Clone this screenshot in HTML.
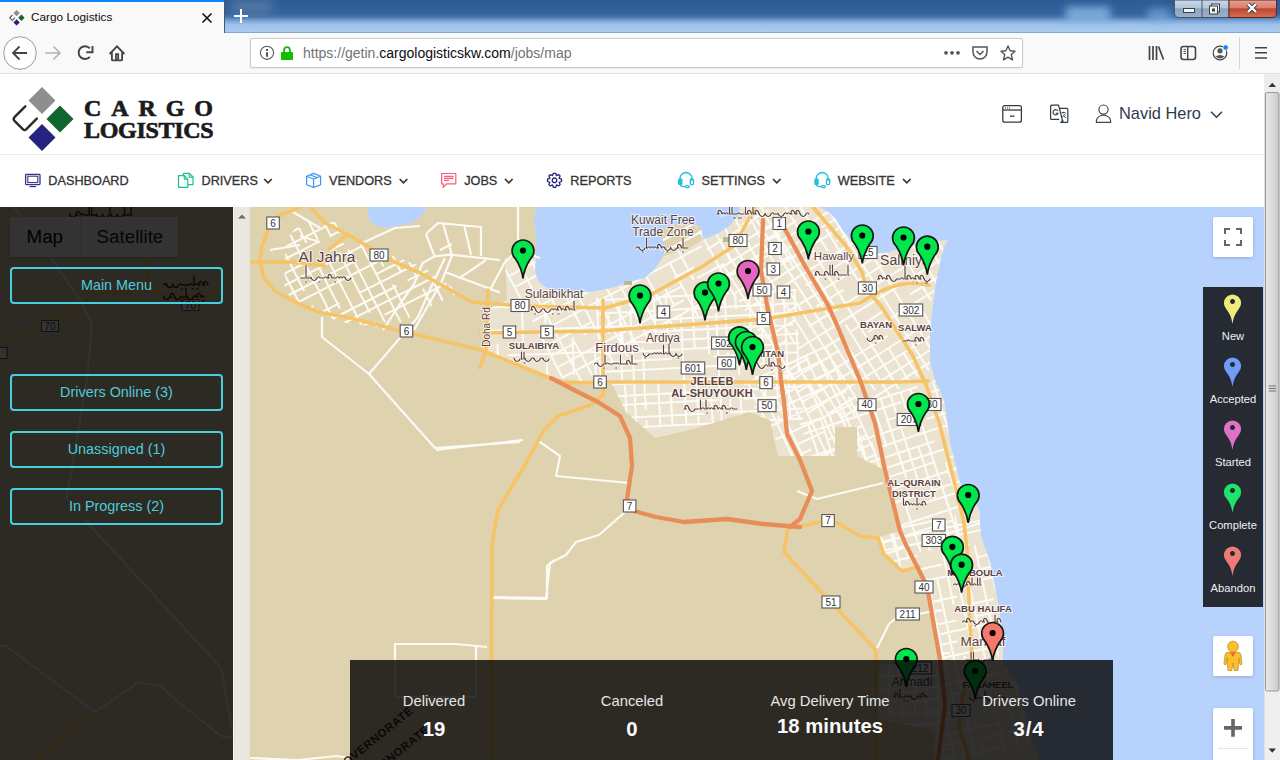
<!DOCTYPE html>
<html><head><meta charset="utf-8">
<style>
*{margin:0;padding:0;box-sizing:border-box}
html,body{width:1280px;height:760px;overflow:hidden;background:#fff;font-family:"Liberation Sans",sans-serif}
.abs{position:absolute}
svg.ic{position:absolute;overflow:visible}
#titlebar{left:0;top:0;width:1280px;height:33px;background:linear-gradient(#2d5b93 0px,#31639d 13px,#4576b0 17px,#7ea7d8 21px,#9fc2ea 25px,#aacbf0 32px);}
#titlebar:after{content:"";position:absolute;left:0;right:0;top:32px;height:1px;background:#8aa6c6}
#tab{left:0;top:0;width:224px;height:33px;background:#f9f9f9;border-top:2px solid #0a84ff}
#toolbar{left:0;top:33px;width:1280px;height:41px;background:#f9f9f9;border-bottom:1px solid #e0e0e0}
#url{left:250px;top:38px;width:773px;height:30px;background:#fff;border:1px solid #c9c9c9;border-radius:2px;box-shadow:0 1px 2px rgba(0,0,0,.06)}
.urltxt{left:303px;top:45px;font-size:14px;color:#737373;white-space:nowrap}
.urltxt b{font-weight:normal;color:#0c0c0d}
#header{left:0;top:74px;width:1264px;height:81px;background:#fff;border-bottom:1px solid #ececec}
#nav{left:0;top:155px;width:1264px;height:52px;background:#fff}
.navi{top:174px;font-size:12.7px;color:#333;white-space:nowrap;line-height:14px;-webkit-text-stroke:0.3px #333}
#scroll{left:1264px;top:74px;width:16px;height:686px;background:#efefef;border-left:1px solid #e2e2e2}
#map{left:0;top:207px;width:1264px;height:553px;overflow:hidden;background:#dfd2ae}
#sidebar{left:0;top:207px;width:233px;height:553px;background:rgba(0,0,0,.8)}
#sstrip{left:233px;top:207px;width:17px;height:553px;background:linear-gradient(90deg,#1e1c16 0,#1e1c16 0px,#faf6ee 0px,#faf6ee 1px,#e2e0da 1px,#e9e7e0 3px,#ebe8e1 14px,#e6e4dd 17px)}
.sbtn{left:10px;width:213px;height:37px;border:2px solid #45cfdf;border-radius:4px;color:#4ecbdb;font-size:14.4px;text-align:center;line-height:33px}
#stats{left:350px;top:660px;width:763px;height:100px;background:rgba(0,0,0,.8)}
.stl{top:693px;font-size:14.8px;color:#e6e6e6;text-align:center;width:200px;white-space:nowrap}
.stv{top:717.5px;font-size:20.3px;font-weight:bold;color:#fafafa;text-align:center;width:200px;white-space:nowrap}
#legend{left:1203px;top:287px;width:60px;height:320px;background:rgba(0,0,0,.8)}
.lgl{left:1203px;width:60px;text-align:center;font-size:11.2px;margin-top:1px;color:#f0f0f0}
.gbtn{background:#fff;border-radius:2px;box-shadow:0 1px 4px -1px rgba(0,0,0,.3)}
</style></head><body>
<!-- browser chrome -->
<div id="titlebar" class="abs"></div>
<div class="abs" style="left:1066px;top:7px;width:44px;height:14px;background:#8fc0ea;filter:blur(4px);opacity:.8"></div>
<div class="abs" style="left:1148px;top:9px;width:22px;height:12px;background:#7fb0de;filter:blur(4px);opacity:.7"></div>
<div class="abs" style="left:232px;top:0px;width:40px;height:14px;background:#6d8aac;filter:blur(5px);opacity:.55"></div>
<div id="tab" class="abs"></div>
<div class="abs" style="left:224px;top:0;width:1px;height:33px;background:#45586e"></div>
<svg class="ic" style="left:0;top:0" width="1280" height="74">
 <!-- favicon -->
 <g transform="translate(16.6,17.8)">
  <path d="M0,-7.9 L3.2,-4.7 L0,-1.5 L-3.2,-4.7Z" fill="#8e8e90"/>
  <path d="M4.8,-3.2 L8,0 L4.8,3.2 L1.6,0Z" fill="#11652e"/>
  <path d="M0,1.4 L3.2,4.6 L0,7.8 L-3.2,4.6Z" fill="#24237f"/>
  <path d="M-4.1,-2.9 L-6.9,0 L-4.3,2.7 L-1.6,-0.2" fill="none" stroke="#555" stroke-width="1.1"/>
 </g>
 <path d="M202.5,13.5 L211.5,22.5 M211.5,13.5 L202.5,22.5" stroke="#0c0c0d" stroke-width="1.5"/>
 <path d="M241,9 V23 M234,16 H248" stroke="#fff" stroke-width="2"/>
 <!-- window controls -->
 <defs>
  <linearGradient id="wg" x1="0" y1="0" x2="0" y2="1"><stop offset="0" stop-color="#c9d8e8"/><stop offset=".45" stop-color="#b3c6da"/><stop offset=".5" stop-color="#8ea5be"/><stop offset="1" stop-color="#97afc8"/></linearGradient>
  <linearGradient id="cg" x1="0" y1="0" x2="0" y2="1"><stop offset="0" stop-color="#e8a195"/><stop offset=".45" stop-color="#d9806f"/><stop offset=".5" stop-color="#c3442c"/><stop offset="1" stop-color="#d0705a"/></linearGradient>
 </defs>
 <path d="M1174.5,0 V13 Q1174.5,17.5 1179,17.5 H1229 V0Z" fill="url(#wg)" stroke="#4a5466" stroke-width="1"/>
 <line x1="1202" y1="0" x2="1202" y2="17" stroke="#4a5466" stroke-width="1"/>
 <path d="M1229,0 V17.5 H1272 Q1276.5,17.5 1276.5,13 V0Z" fill="url(#cg)" stroke="#5a2a22" stroke-width="1"/>
 <rect x="1183.5" y="8.5" width="11" height="4" fill="#f4f4f4" stroke="#3a3f4a" stroke-width="1"/>
 <rect x="1211.5" y="4" width="8" height="8" fill="#f4f4f4" stroke="#3a3f4a" stroke-width="1"/>
 <rect x="1209.5" y="6" width="8" height="8" fill="#f4f4f4" stroke="#3a3f4a" stroke-width="1"/>
 <rect x="1212" y="8.5" width="3" height="3" fill="#3a3f4a"/>
 <path d="M1248,4 L1256,12 M1256,4 L1248,12" stroke="#3a3f4a" stroke-width="4.2"/>
 <path d="M1248,4 L1256,12 M1256,4 L1248,12" stroke="#fafafa" stroke-width="2.4"/>
</svg>
<div class="abs" style="left:31px;top:10px;font-size:11.8px;color:#0c0c0d;white-space:nowrap">Cargo Logistics</div>
<div id="toolbar" class="abs"></div>
<div id="url" class="abs"></div>
<div class="abs urltxt">https://getin.<b>cargologisticskw.com</b>/jobs/map</div>
<svg class="ic" style="left:0;top:0" width="1280" height="74">
 <circle cx="20" cy="53" r="16.3" fill="#fff" stroke="#9a9a9a" stroke-width="1"/>
 <path d="M13,53 H27 M19.5,46.5 L13,53 L19.5,59.5" fill="none" stroke="#444" stroke-width="1.8"/>
 <path d="M45,53 H60 M53.5,46.5 L60,53 L53.5,59.5" fill="none" stroke="#b4b4b4" stroke-width="1.6"/>
 <path d="M89.8,48.3 A6.4,6.4 0 1 0 89.9,56.8" fill="none" stroke="#444" stroke-width="1.9"/>
 <path d="M86.3,52.3 H92.5 V46" fill="none" stroke="#444" stroke-width="1.9"/>
 <path d="M109.6,54 L117,46.4 L124.4,54 M111.9,52 V59.4 Q111.9,60.4 112.9,60.4 H121.1 Q122.1,60.4 122.1,59.4 V52 M116,60.4 V54.2 H118.2 V60.4" fill="none" stroke="#444" stroke-width="1.8"/>
 <circle cx="267" cy="52.8" r="6.6" fill="none" stroke="#555" stroke-width="1.1"/>
 <path d="M267,52.2 V56.8 M267,49 V51" stroke="#555" stroke-width="2"/>
 <path d="M284.1,52.5 V50 A2.9,2.9 0 0 1 289.9,50 V52.5" fill="none" stroke="#12bc00" stroke-width="1.8"/>
 <rect x="281" y="52" width="12" height="8" rx="0.6" fill="#12bc00"/>
 <circle cx="946" cy="52.8" r="1.9" fill="#555"/><circle cx="952" cy="52.8" r="1.9" fill="#555"/><circle cx="958" cy="52.8" r="1.9" fill="#555"/>
 <path d="M973,47 H987 V52 A7,7 0 0 1 973,52Z" fill="none" stroke="#555" stroke-width="1.5"/>
 <path d="M976.5,51 L980,54.5 L983.5,51" fill="none" stroke="#555" stroke-width="1.5"/>
 <path d="M1008,46 L1010.2,50.8 L1015,51.3 L1011.3,54.6 L1012.5,59.8 L1008,57.1 L1003.5,59.8 L1004.7,54.6 L1001,51.3 L1005.8,50.8Z" fill="none" stroke="#555" stroke-width="1.4" stroke-linejoin="round"/>
 <path d="M1149.5,46 V60 M1153,46 V60 M1156.5,46 V60 M1158.5,46.5 L1163.5,59.5" stroke="#444" stroke-width="1.7"/>
 <rect x="1181" y="46.5" width="14.5" height="13" rx="2.5" fill="none" stroke="#444" stroke-width="1.6"/>
 <path d="M1187.7,46.5 V59.5" stroke="#444" stroke-width="1.4"/>
 <path d="M1183.5,49.5 H1186 M1183.5,51.5 H1186 M1183.5,53.5 H1186" stroke="#444" stroke-width="0.9"/>
 <circle cx="1220" cy="53" r="6.8" fill="none" stroke="#444" stroke-width="1.2"/>
 <circle cx="1220" cy="50.8" r="2.6" fill="#555"/>
 <path d="M1215.5,56.5 Q1220,53.5 1224.5,56.5 Q1222,58.5 1220,58.5 Q1218,58.5 1215.5,56.5Z" fill="#555"/>
 <circle cx="1225.6" cy="47.5" r="2.7" fill="#0a84ff" stroke="#f9f9f9" stroke-width="0.8"/>
 <line x1="1239.5" y1="37" x2="1239.5" y2="69" stroke="#d6d6d6" stroke-width="1"/>
 <path d="M1255,47.8 H1267 M1255,52.8 H1267 M1255,58 H1267" stroke="#444" stroke-width="1.6"/>
</svg>

<!-- page -->
<div id="header" class="abs"></div>
<div id="nav" class="abs"></div>
<svg class="ic" style="left:0;top:0" width="1280" height="210">
 <path d="M42,87 L55.5,100.5 L42,114 L28.5,100.5Z" fill="#8e8e90"/>
 <path d="M60,105.5 L73.5,119 L60,132.5 L46.5,119Z" fill="#11652e"/>
 <path d="M42,124 L55.5,137.5 L42,151 L28.5,137.5Z" fill="#24237f"/>
 <path d="M25.3,106.3 L14.5,117.2 Q12.8,119 14.5,120.8 L22.8,129.2 Q24.6,131 26.4,129.2 L36.8,118.6" fill="none" stroke="#2b2b2b" stroke-width="2.4" stroke-linecap="round"/>
 <g fill="none" stroke="#333b44" stroke-width="1.3">
  <rect x="1002.8" y="105.6" width="18.6" height="16.6" rx="2"/>
  <path d="M1002.8,110 H1021.4"/>
  <path d="M1010,116.2 H1014.5" stroke-width="1.6" stroke="#5a6066"/>
 </g>
 <g fill="#333b44"><circle cx="1005.5" cy="107.9" r=".6"/><circle cx="1007.6" cy="107.9" r=".6"/><circle cx="1009.6" cy="107.9" r=".6"/></g>
 <g fill="none" stroke="#333b44" stroke-width="1.2">
  <path d="M1059.2,119.3 H1051.5 Q1050.6,119.3 1050.6,118.4 V106.1 Q1050.6,105.2 1051.5,105.2 H1058.5 L1063,122.5"/>
  <path d="M1059.5,108.4 H1066.8 Q1067.8,108.4 1067.8,109.4 V121.4 Q1067.8,122.4 1066.8,122.4 H1061 L1063.2,119.8"/>
  <path d="M1057.9,111 A2.6,2.6 0 1 0 1058,113.3 H1055.8" stroke-width="1.1"/>
  <path d="M1061.5,112.6 H1065.5 M1063.5,111.8 V113.3 M1062,117.5 L1065.5,113.6 M1063.5,115.5 L1065.8,118" stroke-width="0.9"/>
 </g>
 <g fill="none" stroke="#3f464d" stroke-width="1.2">
  <circle cx="1103.5" cy="109.6" r="4.6"/>
  <path d="M1096.4,122.4 V120.5 A7.2,6.4 0 0 1 1110.6,120.5 V122.4 Z"/>
 </g>
 <path d="M1211,111.8 L1216.5,117.2 L1222,111.8" fill="none" stroke="#2e3a4f" stroke-width="1.5"/>
 <!-- nav icons -->
 <g fill="none" stroke="#34348a" stroke-width="1.3">
  <rect x="25.6" y="174.4" width="14.4" height="10.2" rx="0.8"/>
  <rect x="27.8" y="176.2" width="10" height="6.4" stroke-width="1.1"/>
  <path d="M29.5,186.6 H36" stroke-width="1.2"/>
 </g>
 <g fill="none" stroke="#1dbf8e" stroke-width="1.2" stroke-linejoin="round">
  <path d="M183.5,175.3 V173.4 H189.3 L193,177 V184.6 H187.9"/>
  <path d="M189.2,173.5 V177.2 H193"/>
  <path d="M178.5,175.6 H184.3 L187.8,179.1 V187.3 H178.5 Z"/>
  <path d="M184.3,175.6 V179.1 H187.8"/>
 </g>
 <g fill="none" stroke="#3d95f5" stroke-width="1.2" stroke-linejoin="round">
  <path d="M306.6,176.2 L313.6,173.4 L320.6,176.2 V184.8 L313.6,187.4 L306.6,184.8 Z"/>
  <path d="M306.6,176.2 L313.6,179 L320.6,176.2 M313.6,179 V187.4"/>
  <path d="M310,174.8 L317,177.6"/>
 </g>
 <g fill="none" stroke="#ff5a78" stroke-width="1.2" stroke-linejoin="round">
  <path d="M441.6,173.5 H455.8 V183.8 H446.8 L443.2,187.3 V183.8 H441.6 Z"/>
  <path d="M444,176.4 H453.7 M444,178.4 H453.7 M444,180.3 H449"/>
 </g>
 <g transform="translate(554.5,180.3)" fill="none" stroke="#25257f" stroke-width="1.3" stroke-linejoin="round">
  <path d="M-1.2,-7 H1.2 L2,-4.6 L4.3,-5.6 L5.6,-4.3 L4.6,-2 L7,-1.2 V1.2 L4.6,2 L5.6,4.3 L4.3,5.6 L2,4.6 L1.2,7 H-1.2 L-2,4.6 L-4.3,5.6 L-5.6,4.3 L-4.6,2 L-7,1.2 V-1.2 L-4.6,-2 L-5.6,-4.3 L-4.3,-5.6 L-2,-4.6 Z"/>
  <circle r="2.3"/>
 </g>
 <g id="hs" fill="none" stroke="#26c0dc" stroke-width="1.3">
  <path d="M680,181 V178.5 A6,6 0 0 1 692,178.5 V181"/>
  <rect x="678.7" y="179" width="3.2" height="5.6" rx="1" fill="#26c0dc"/>
  <rect x="690.3" y="179" width="3.2" height="5.6" rx="1"/>
  <path d="M680.5,184.6 Q680.5,186.6 683,186.6 H685.3"/>
  <rect x="685.3" y="185.6" width="4" height="2" rx="1"/>
 </g>
 <use href="#hs" x="136.2" y="0"/>
 <g fill="none" stroke="#333" stroke-width="1.7">
  <path d="M264.2,179 L268,182.8 L271.8,179"/>
  <path d="M399.7,179 L403.5,182.8 L407.3,179"/>
  <path d="M505,179 L508.8,182.8 L512.6,179"/>
  <path d="M773,179 L776.8,182.8 L780.6,179"/>
  <path d="M903,179 L906.8,182.8 L910.6,179"/>
 </g>
</svg>
<div class="abs" style="left:84px;top:96px;font-family:'Liberation Serif',serif;font-weight:bold;font-size:24px;line-height:24px;color:#1b1b1b;letter-spacing:9.9px;white-space:nowrap;-webkit-text-stroke:0.7px #1b1b1b">CARGO</div>
<div class="abs" style="left:84px;top:118px;font-family:'Liberation Serif',serif;font-weight:bold;font-size:24px;line-height:24px;color:#1b1b1b;letter-spacing:-0.3px;white-space:nowrap;-webkit-text-stroke:0.7px #1b1b1b">LOGISTICS</div>
<div class="abs" style="left:1119px;top:104px;font-size:16.4px;color:#2e3a4f;white-space:nowrap">Navid Hero</div>

<div class="abs navi" style="left:48.3px">DASHBOARD</div>
<div class="abs navi" style="left:201.5px">DRIVERS</div>
<div class="abs navi" style="left:329px">VENDORS</div>
<div class="abs navi" style="left:464.2px">JOBS</div>
<div class="abs navi" style="left:570.3px">REPORTS</div>
<div class="abs navi" style="left:701.6px">SETTINGS</div>
<div class="abs navi" style="left:837.7px">WEBSITE</div>

<div id="map" class="abs"><svg width="1264" height="553" viewBox="0 207 1264 553" style="display:block">
<defs>
<symbol id="pin" overflow="visible"><path d="M0,28 C-0.9,21 -2.4,16 -7.5,8.3 A10.9,10.9 0 1 1 7.5,8.3 C2.4,16 0.9,21 0,28Z" stroke="#131a14" stroke-width="1.7"/><circle cx="0" cy="0" r="3.1" fill="#000"/></symbol>
<clipPath id="uc"><path d="M505,258 L540,258 L540,207 L1264,207 L1264,760 L935,760 L935,730 L880,720 L870,700 L880,665 L940,660 L927,586 L917,570 L902,571 L884,554 L880,537 L900,531 L885,470 L857,456 L857,427 L835,427 L835,456 L778,456 L770,420 L749,412 L713,423 L690,430 L655,438 L626,412 L612,384 L550,378 L483,350 L487,310 L507,300 Z"/></clipPath>
</defs>
<rect x="0" y="207" width="1264" height="553" fill="#dfd2ae"/>
<path fill="#ebe3cf" d="M505,258 L540,258 L540,207 L1264,207 L1264,760 L935,760 L935,730 L880,720 L870,700 L880,665 L940,660 L927,586 L917,570 L902,571 L884,554 L880,537 L900,531 L885,470 L857,456 L857,427 L835,427 L835,456 L778,456 L770,420 L749,412 L713,423 L690,430 L655,438 L626,412 L612,384 L550,378 L483,350 L487,310 L507,300 Z"/>
<path fill="#dfd2ae" d="M660,235 L665,227 L676,224 L701,227 L703,239 L690,248 L664,256 L665,244 Z"/>

<path clip-path="url(#uc)" fill="none" stroke="#fcfbf6" stroke-width="2" d="M567.6,229.5L602.1,211.2 M602.1,211.2L617.7,202.9 M617.7,202.9L632.4,195.1 M648.4,186.6L678.5,170.6 M696.7,160.9L731.9,142.2 M508.7,276.1L537.7,260.7 M537.7,260.7L552.8,252.7 M577.5,239.5L595.5,230.0 M641.1,205.7L677.5,186.4 M677.5,186.4L705.5,171.4 M721.3,163.1L738.2,154.0 M514.6,287.2L540.3,273.5 M540.3,273.5L571.5,256.9 M571.5,256.9L616.4,233.1 M616.4,233.1L639.3,220.9 M639.3,220.9L673.4,202.8 M673.4,202.8L715.6,180.3 M596.4,257.8L636.2,236.7 M636.2,236.7L672.3,217.5 M672.3,217.5L698.0,203.9 M698.0,203.9L734.8,184.3 M734.8,184.3L750.0,176.2 M527.8,312.1L559.9,295.0 M559.9,295.0L575.5,286.7 M575.5,286.7L614.5,266.0 M614.5,266.0L660.4,241.6 M660.4,241.6L689.0,226.4 M689.0,226.4L703.1,218.9 M723.0,208.3L738.6,200.0 M757.0,190.2L757.4,190.0 M532.7,321.3L563.8,304.8 M563.8,304.8L612.2,279.1 M612.2,279.1L659.7,253.8 M659.7,253.8L689.5,238.0 M689.5,238.0L737.9,212.3 M538.8,332.7L575.4,313.3 M575.4,313.3L588.8,306.1 M588.8,306.1L616.8,291.3 M616.8,291.3L667.9,264.1 M667.9,264.1L701.6,246.2 M741.7,224.8L768.4,210.7 M545.9,346.2L590.9,322.3 M674.4,277.9L694.0,267.5 M756.3,234.3L775.5,224.1 M551.1,355.8L574.3,343.4 M602.0,328.7L649.0,303.7 M649.0,303.7L680.8,286.8 M697.4,278.0L724.3,263.7 M770.5,239.2L780.6,233.8 M557.2,367.4L576.3,357.3 M576.3,357.3L590.6,349.7 M590.6,349.7L642.7,322.0 M642.7,322.0L683.7,300.2 M711.5,285.4L755.4,262.1 M755.4,262.1L786.8,245.4 M562.6,377.5L608.0,353.3 M608.0,353.3L655.2,328.2 M655.2,328.2L700.9,303.9 M700.9,303.9L723.2,292.1 M750.6,277.5L764.9,269.9 M764.9,269.9L788.4,257.4 M788.4,257.4L792.1,255.4 M502.4,264.2L521.0,299.2 M538.7,332.6L546.3,346.8 M546.3,346.8L563.6,379.5 M563.6,379.5L568.1,387.8 M515.4,257.3L521.3,268.4 M521.3,268.4L538.8,301.3 M538.8,301.3L554.1,330.0 M554.1,330.0L561.3,343.5 M561.3,343.5L570.7,361.2 M570.7,361.2L581.1,380.9 M526.4,251.5L544.4,285.4 M551.5,298.7L558.3,311.5 M574.4,341.7L590.7,372.4 M590.7,372.4L592.1,375.1 M544.7,257.5L563.0,292.1 M563.0,292.1L575.1,314.8 M575.1,314.8L585.9,335.2 M602.3,365.9L603.8,368.8 M548.2,239.8L561.2,264.2 M571.8,284.1L589.3,317.1 M589.3,317.1L600.4,338.0 M600.4,338.0L613.9,363.5 M561.9,232.6L573.7,254.7 M596.6,297.9L601.4,306.8 M601.4,306.8L608.5,320.2 M608.5,320.2L623.4,348.2 M623.4,348.2L627.6,356.2 M602.0,279.6L610.6,295.7 M610.6,295.7L622.4,318.0 M622.4,318.0L637.8,347.0 M637.8,347.0L639.4,349.9 M585.2,220.2L597.1,242.6 M597.1,242.6L608.2,263.4 M608.2,263.4L619.6,284.9 M619.6,284.9L634.1,312.2 M634.1,312.2L650.9,343.8 M597.0,213.9L615.0,247.7 M640.6,295.9L654.7,322.5 M623.6,233.5L640.7,265.7 M640.7,265.7L648.5,280.4 M648.5,280.4L658.8,299.8 M658.8,299.8L675.3,330.8 M619.3,202.0L630.1,222.3 M639.5,240.1L648.7,257.4 M648.7,257.4L653.7,266.7 M664.6,287.2L673.9,304.8 M633.3,194.6L649.1,224.3 M649.1,224.3L655.3,235.9 M655.3,235.9L660.6,245.8 M669.1,261.8L679.7,281.8 M679.7,281.8L695.9,312.3 M695.9,312.3L699.1,318.2 M659.7,215.7L665.3,226.0 M675.9,246.1L693.8,279.8 M658.6,181.2L669.7,202.0 M669.7,202.0L682.2,225.5 M714.4,286.1L723.5,303.2 M723.5,303.2L724.3,304.8 M670.1,175.1L677.3,188.6 M677.3,188.6L682.2,197.9 M682.2,197.9L687.1,207.1 M699.6,230.6L711.0,252.0 M711.0,252.0L717.2,263.6 M717.2,263.6L727.9,283.9 M727.9,283.9L735.8,298.7 M681.6,168.9L696.0,196.0 M696.0,196.0L705.5,213.9 M705.5,213.9L720.1,241.4 M720.1,241.4L730.5,261.0 M736.0,271.3L741.7,282.0 M690.9,164.0L707.4,195.1 M707.4,195.1L721.5,221.7 M721.5,221.7L729.6,236.9 M740.8,257.9L751.8,278.6 M751.8,278.6L756.6,287.6 M702.6,157.8L710.7,173.1 M710.7,173.1L719.8,190.1 M719.8,190.1L724.5,199.0 M724.5,199.0L735.9,220.4 M735.9,220.4L743.4,234.5 M743.4,234.5L748.2,243.5 M748.2,243.5L754.1,254.7 M714.5,151.4L726.7,174.3 M726.7,174.3L740.6,200.5 M740.6,200.5L757.7,232.6 M757.7,232.6L767.0,250.1 M767.0,250.1L773.8,262.9 M727.8,144.4L745.0,176.8 M745.0,176.8L760.1,205.1 M760.1,205.1L766.7,217.6 M766.7,217.6L778.5,239.8 M778.5,239.8L793.5,268.0 M478.7,307.8L525.4,306.2 M617.9,303.0L638.6,302.2 M479.5,331.3L518.2,330.0 M552.9,328.8L596.8,327.2 M596.8,327.2L631.9,326.0 M507.9,355.2L535.8,354.2 M535.8,354.2L562.0,353.3 M562.0,353.3L611.2,351.6 M611.2,351.6L640.2,350.6 M481.2,380.4L524.2,378.9 M478.7,307.8L479.4,329.5 M479.4,329.5L480.5,361.8 M480.5,361.8L481.3,384.1 M481.3,384.1L481.4,387.8 M497.4,344.5L498.7,384.0 M498.7,384.0L498.9,387.2 M521.9,306.3L523.3,345.5 M544.9,305.5L545.5,324.0 M546.9,362.8L547.6,385.5 M572.6,337.1L573.9,374.6 M594.9,348.6L595.7,371.5 M595.7,371.5L596.2,383.8 M619.4,302.9L620.0,320.9 M620.0,320.9L621.2,353.7 M621.2,353.7L622.0,375.9 M622.0,375.9L622.2,382.9 M596.7,300.3L627.9,298.7 M655.3,297.3L674.8,296.2 M674.8,296.2L702.6,294.8 M702.6,294.8L728.8,293.4 M766.8,291.4L796.5,289.9 M597.4,313.7L648.9,311.0 M648.9,311.0L704.9,308.1 M704.9,308.1L744.6,306.0 M744.6,306.0L761.8,305.1 M761.8,305.1L797.0,303.3 M797.0,303.3L797.2,303.3 M654.5,320.0L690.7,318.1 M690.7,318.1L719.1,316.6 M719.1,316.6L778.0,313.5 M778.0,313.5L797.6,312.5 M653.5,331.8L709.2,328.9 M709.2,328.9L734.0,327.6 M734.0,327.6L793.8,324.5 M629.4,342.6L655.1,341.2 M655.1,341.2L695.7,339.1 M695.7,339.1L744.3,336.6 M744.3,336.6L777.9,334.8 M777.9,334.8L798.8,333.7 M599.5,353.5L627.0,352.0 M627.0,352.0L647.6,350.9 M647.6,350.9L690.9,348.7 M690.9,348.7L715.6,347.4 M715.6,347.4L741.7,346.0 M741.7,346.0L776.7,344.2 M776.7,344.2L799.2,343.0 M600.0,362.6L616.4,361.7 M616.4,361.7L671.7,358.8 M713.0,356.6L745.6,354.9 M745.6,354.9L797.7,352.2 M600.5,372.1L622.4,370.9 M622.4,370.9L668.0,368.6 M668.0,368.6L715.5,366.1 M715.5,366.1L764.8,363.5 M601.2,385.0L626.6,383.7 M626.6,383.7L670.6,381.4 M670.6,381.4L691.3,380.3 M691.3,380.3L734.9,378.0 M754.9,376.9L793.5,374.9 M601.8,397.0L617.3,396.2 M617.3,396.2L652.9,394.3 M652.9,394.3L696.9,392.0 M733.2,390.1L759.3,388.7 M759.3,388.7L801.5,386.5 M602.3,406.1L639.7,404.1 M639.7,404.1L673.5,402.3 M673.5,402.3L718.5,400.0 M743.6,398.7L773.8,397.1 M603.0,419.0L651.2,416.5 M651.2,416.5L675.4,415.2 M675.4,415.2L704.3,413.7 M729.7,412.4L778.8,409.8 M778.8,409.8L802.7,408.6 M603.5,429.0L628.5,427.7 M628.5,427.7L673.4,425.3 M673.4,425.3L694.9,424.2 M694.9,424.2L719.5,422.9 M740.8,421.8L758.5,420.8 M758.5,420.8L803.2,418.5 M596.7,300.3L598.8,340.2 M599.9,360.0L601.9,398.1 M601.9,398.1L602.4,409.0 M602.4,409.0L603.5,430.1 M608.2,314.8L609.1,333.2 M613.2,410.7L614.2,429.6 M621.7,322.0L622.9,346.2 M624.9,383.7L626.0,404.6 M626.0,404.6L626.6,415.5 M626.6,415.5L627.3,428.9 M630.2,309.6L632.2,347.2 M632.2,347.2L633.9,379.6 M633.9,379.6L635.0,399.7 M635.0,399.7L636.5,428.4 M640.0,298.1L641.6,329.5 M642.6,347.8L644.3,380.4 M644.3,380.4L645.8,409.4 M646.4,420.1L646.8,427.9 M653.7,297.3L654.8,318.9 M654.8,318.9L656.0,341.8 M658.0,379.6L659.8,413.6 M659.8,413.6L660.5,427.2 M665.7,296.7L666.8,316.5 M666.8,316.5L667.9,337.3 M670.8,394.2L672.2,420.7 M672.2,420.7L672.5,426.5 M680.6,313.9L681.3,326.8 M681.3,326.8L682.9,358.0 M682.9,358.0L683.8,375.0 M683.8,375.0L685.3,403.6 M685.3,403.6L686.5,425.8 M692.0,295.3L692.7,308.9 M692.7,308.9L693.7,327.7 M693.7,327.7L694.8,348.9 M696.5,382.2L698.4,418.7 M698.4,418.7L698.8,425.2 M707.2,319.8L709.0,354.0 M711.1,393.7L712.4,417.9 M712.4,417.9L712.7,424.4 M716.1,312.9L716.9,328.6 M716.9,328.6L718.3,356.0 M718.3,356.0L719.4,377.2 M719.4,377.2L720.7,400.6 M720.7,400.6L721.9,423.9 M724.6,293.6L726.1,321.5 M726.1,321.5L726.9,338.0 M727.7,352.2L728.6,369.8 M730.1,399.3L730.7,409.7 M735.1,293.1L736.0,309.1 M737.4,335.6L738.1,348.6 M738.1,348.6L739.4,375.0 M740.1,387.8L741.7,418.6 M741.7,418.6L742.0,422.9 M748.9,292.3L749.9,311.7 M749.9,311.7L751.0,332.4 M751.0,332.4L752.9,368.3 M755.6,420.9L755.7,422.2 M760.0,291.8L761.8,326.3 M761.8,326.3L763.7,362.8 M764.5,377.6L765.9,404.1 M772.1,291.1L773.2,312.2 M773.2,312.2L774.0,326.6 M774.0,326.6L775.3,352.2 M775.3,352.2L776.0,365.4 M776.0,365.4L777.8,399.5 M778.6,415.4L778.9,421.0 M783.5,290.5L784.1,302.1 M784.1,302.1L785.2,323.7 M785.2,323.7L786.7,352.3 M786.7,352.3L787.5,367.1 M787.5,367.1L788.4,383.7 M788.4,383.7L790.2,419.1 M794.5,290.0L795.8,315.5 M796.5,329.1L798.2,360.8 M798.2,360.8L798.8,372.1 M876.5,143.7L897.6,177.4 M897.6,177.4L912.8,201.8 M912.8,201.8L934.7,236.8 M934.7,236.8L958.3,274.7 M976.7,304.1L993.1,330.3 M867.9,149.1L894.0,191.0 M932.2,252.0L943.2,269.6 M943.2,269.6L953.3,285.8 M857.1,155.8L883.6,198.2 M883.6,198.2L892.9,213.0 M892.9,213.0L909.8,240.2 M909.8,240.2L921.0,258.1 M921.0,258.1L952.7,308.8 M845.3,163.2L865.0,194.7 M894.8,242.4L921.6,285.2 M921.6,285.2L931.1,300.4 M957.1,342.0L961.9,349.8 M834.3,170.1L845.6,188.3 M875.5,236.2L889.7,258.9 M917.6,303.5L947.9,351.9 M823.3,177.0L834.0,194.1 M834.0,194.1L857.1,231.1 M857.1,231.1L885.9,277.1 M885.9,277.1L907.7,312.0 M907.7,312.0L918.1,328.7 M918.1,328.7L939.9,363.5 M812.3,183.9L826.5,206.7 M826.5,206.7L848.3,241.4 M848.3,241.4L874.4,283.3 M874.4,283.3L886.6,302.8 M886.6,302.8L895.7,317.4 M895.7,317.4L909.7,339.8 M909.7,339.8L928.9,370.4 M826.0,229.1L848.6,265.3 M848.6,265.3L868.8,297.6 M903.4,353.0L911.4,365.8 M911.4,365.8L918.4,377.0 M793.2,195.8L815.1,230.7 M815.1,230.7L827.9,251.3 M889.0,349.0L909.8,382.3 M782.3,202.6L799.8,230.7 M799.8,230.7L808.1,243.8 M808.1,243.8L829.4,278.0 M829.4,278.0L852.8,315.4 M852.8,315.4L883.1,363.8 M883.1,363.8L896.9,386.0 M896.9,386.0L898.9,389.2 M813.1,272.7L834.2,306.4 M845.5,324.6L868.0,360.5 M868.0,360.5L889.5,395.0 M764.6,213.7L779.9,238.2 M779.9,238.2L789.0,252.8 M789.0,252.8L815.6,295.4 M815.6,295.4L823.7,308.3 M823.7,308.3L849.4,349.5 M849.4,349.5L875.1,390.5 M756.0,219.1L764.8,233.3 M764.8,233.3L790.7,274.6 M790.7,274.6L818.8,319.6 M818.8,319.6L833.1,342.4 M833.1,342.4L851.4,371.8 M851.4,371.8L871.8,404.5 M871.8,404.5L872.5,405.6 M790.5,293.4L816.2,334.5 M816.2,334.5L841.9,375.7 M841.9,375.7L864.0,411.0 M738.8,229.8L768.3,277.2 M768.3,277.2L792.8,316.3 M792.8,316.3L824.1,366.4 M824.1,366.4L852.1,411.2 M852.1,411.2L855.3,416.4 M728.1,236.5L749.6,271.0 M749.6,271.0L762.6,291.8 M762.6,291.8L772.4,307.5 M783.8,325.7L794.3,342.5 M819.1,382.2L843.6,421.4 M843.6,421.4L844.6,423.1 M720.1,241.4L742.2,276.7 M742.2,276.7L769.6,320.6 M798.8,367.3L827.5,413.2 M722.3,263.7L750.4,308.8 M750.4,308.8L773.5,345.7 M773.5,345.7L796.5,382.6 M857.3,155.8L842.2,165.1 M842.2,165.1L815.6,181.8 M815.6,181.8L798.9,192.2 M798.9,192.2L777.6,205.5 M753.4,220.7L734.4,232.5 M734.4,232.5L706.9,249.7 M792.7,210.9L764.8,228.3 M764.8,228.3L756.3,233.6 M756.3,233.6L735.3,246.7 M735.3,246.7L722.1,255.0 M722.1,255.0L713.5,260.3 M888.6,163.1L856.1,183.4 M856.1,183.4L842.2,192.1 M796.3,220.7L767.8,238.6 M767.8,238.6L739.3,256.4 M739.3,256.4L721.8,267.3 M721.8,267.3L719.0,269.1 M862.5,190.5L848.8,199.1 M848.8,199.1L817.4,218.7 M817.4,218.7L799.3,230.0 M799.3,230.0L784.8,239.0 M784.8,239.0L762.8,252.8 M762.8,252.8L735.2,270.1 M735.2,270.1L724.0,277.1 M898.8,179.4L868.9,198.1 M841.5,215.2L821.9,227.4 M798.6,241.9L778.4,254.6 M763.9,263.7L747.7,273.8 M904.0,187.7L889.2,196.9 M850.6,221.0L817.3,241.8 M817.3,241.8L806.2,248.7 M806.2,248.7L795.2,255.6 M795.2,255.6L761.7,276.6 M761.7,276.6L734.5,293.5 M734.5,293.5L734.4,293.6 M909.0,195.7L895.3,204.3 M895.3,204.3L885.9,210.2 M885.9,210.2L857.3,228.0 M857.3,228.0L836.1,241.3 M815.9,254.0L792.0,268.9 M792.0,268.9L764.7,285.9 M764.7,285.9L745.3,298.1 M745.3,298.1L739.4,301.7 M914.4,204.4L887.5,221.1 M887.5,221.1L859.4,238.7 M859.4,238.7L829.2,257.6 M829.2,257.6L804.4,273.1 M804.4,273.1L788.0,283.4 M788.0,283.4L777.0,290.2 M777.0,290.2L748.6,308.0 M748.6,308.0L744.8,310.3 M920.3,213.8L900.2,226.3 M900.2,226.3L881.3,238.1 M849.2,258.2L824.1,273.9 M824.1,273.9L805.7,285.4 M927.1,224.7L894.7,245.0 M894.7,245.0L883.7,251.9 M883.7,251.9L861.4,265.8 M861.4,265.8L839.9,279.2 M839.9,279.2L810.3,297.7 M810.3,297.7L791.4,309.5 M791.4,309.5L777.6,318.2 M777.6,318.2L759.1,329.7 M759.1,329.7L757.5,330.7 M932.8,233.9L922.9,240.1 M904.3,251.7L885.1,263.7 M885.1,263.7L858.9,280.1 M843.7,289.6L816.3,306.7 M794.4,320.4L765.6,338.4 M939.7,244.8L910.6,263.0 M910.6,263.0L890.2,275.7 M890.2,275.7L875.9,284.6 M875.9,284.6L858.5,295.5 M858.5,295.5L829.2,313.8 M829.2,313.8L808.8,326.6 M786.4,340.6L770.1,350.8 M946.7,256.0L931.4,265.6 M931.4,265.6L916.5,274.9 M903.3,283.2L876.4,299.9 M876.4,299.9L861.7,309.1 M861.7,309.1L841.0,322.1 M841.0,322.1L816.3,337.5 M816.3,337.5L798.6,348.5 M953.7,267.2L922.1,286.9 M922.1,286.9L910.1,294.4 M885.5,309.8L876.7,315.3 M876.7,315.3L851.5,331.0 M840.5,337.9L826.1,346.9 M808.8,357.7L784.0,373.2 M958.9,275.5L927.7,295.0 M927.7,295.0L899.4,312.7 M899.4,312.7L868.1,332.2 M838.3,350.8L812.2,367.2 M812.2,367.2L789.3,381.5 M966.0,286.9L943.4,301.0 M887.5,335.9L866.6,349.0 M866.6,349.0L844.4,362.9 M844.4,362.9L835.7,368.3 M835.7,368.3L815.3,381.0 M815.3,381.0L796.4,392.9 M971.7,296.1L952.6,308.1 M952.6,308.1L942.2,314.6 M917.5,330.0L893.5,345.0 M893.5,345.0L861.4,365.1 M861.4,365.1L827.9,386.0 M827.9,386.0L807.1,399.0 M807.1,399.0L802.1,402.1 M978.2,306.4L961.1,317.1 M961.1,317.1L943.3,328.2 M943.3,328.2L921.4,341.9 M921.4,341.9L907.6,350.5 M907.6,350.5L888.4,362.5 M888.4,362.5L858.8,381.0 M858.8,381.0L829.3,399.4 M829.3,399.4L808.6,412.4 M984.3,316.2L951.0,337.0 M951.0,337.0L922.4,354.9 M922.4,354.9L905.8,365.2 M905.8,365.2L882.4,379.8 M854.0,397.6L827.1,414.4 M981.2,330.5L949.3,350.4 M949.3,350.4L924.1,366.2 M924.1,366.2L892.4,386.0 M892.4,386.0L868.3,401.1 M868.3,401.1L842.1,417.4 M825.4,346.6L840.5,378.9 M848.7,396.6L855.8,411.7 M855.8,411.7L876.1,455.4 M815.3,351.3L837.2,398.5 M837.2,398.5L854.3,435.0 M854.3,435.0L866.0,460.1 M805.4,356.0L819.9,387.1 M796.6,360.1L818.3,406.7 M818.3,406.7L842.1,457.8 M842.1,457.8L847.3,468.8 M785.2,365.4L809.4,417.2 M809.4,417.2L824.8,450.2 M824.8,450.2L833.0,467.9 M777.0,369.2L783.4,383.0 M783.4,383.0L792.0,401.6 M792.0,401.6L800.1,418.7 M774.7,396.1L795.8,441.3 M795.8,441.3L815.5,483.6 M756.2,378.9L774.5,418.1 M774.5,418.1L789.6,450.5 M789.6,450.5L800.8,474.5 M748.0,382.7L766.7,422.9 M766.7,422.9L774.5,439.7 M794.7,483.0L798.7,491.5 M825.4,346.6L806.4,355.5 M806.4,355.5L785.4,365.3 M785.4,365.3L772.4,371.3 M772.4,371.3L753.4,380.2 M753.4,380.2L743.9,384.6 M830.2,356.9L799.8,371.1 M799.8,371.1L769.4,385.2 M752.4,393.2L748.6,394.9 M836.1,369.5L818.0,378.0 M818.0,378.0L782.4,394.6 M782.4,394.6L757.0,406.4 M757.0,406.4L754.5,407.5 M840.9,379.7L813.2,392.6 M813.2,392.6L779.8,408.2 M763.0,416.0L759.3,417.8 M846.2,391.1L814.9,405.6 M814.9,405.6L804.7,410.4 M804.7,410.4L773.6,424.9 M773.6,424.9L764.6,429.1 M852.1,403.9L821.1,418.3 M821.1,418.3L787.2,434.1 M787.2,434.1L775.8,439.4 M823.4,432.1L797.9,444.0 M862.3,425.6L832.8,439.4 M811.2,449.4L780.7,463.7 M866.7,435.1L841.8,446.6 M841.8,446.6L808.7,462.1 M808.7,462.1L786.7,472.3 M870.9,444.2L842.8,457.3 M842.8,457.3L818.4,468.7 M795.3,479.5L789.4,482.2 M875.7,454.4L863.7,460.0 M833.3,474.2L808.0,486.0 M990.4,363.0L1008.8,419.7 M1008.8,419.7L1020.2,454.7 M1020.2,454.7L1028.5,480.2 M1028.5,480.2L1039.0,512.7 M1039.0,512.7L1039.8,515.2 M998.6,433.1L1011.0,471.3 M1011.0,471.3L1022.0,505.1 M976.0,402.3L994.0,457.6 M994.0,457.6L1006.5,496.0 M1006.5,496.0L1015.3,523.2 M966.3,407.8L984.3,463.4 M992.1,487.2L1000.3,512.4 M1000.3,512.4L1004.9,526.5 M942.9,378.5L948.2,394.7 M948.2,394.7L962.7,439.4 M981.0,495.8L987.6,516.3 M987.6,516.3L992.3,530.6 M932.9,381.7L945.7,421.3 M945.7,421.3L951.9,440.1 M945.8,462.2L963.4,516.4 M910.2,389.1L916.2,407.5 M916.2,407.5L932.6,457.8 M932.6,457.8L943.5,491.4 M943.5,491.4L959.6,540.9 M900.6,392.2L906.0,408.9 M918.4,446.8L935.1,498.4 M945.5,530.2L950.1,544.3 M890.5,395.5L897.4,416.9 M897.4,416.9L906.5,444.8 M906.5,444.8L912.7,464.0 M912.7,464.0L918.1,480.7 M932.1,523.5L939.9,547.6 M880.7,398.7L888.1,421.6 M888.1,421.6L906.5,478.2 M924.0,532.1L930.1,550.8 M871.9,401.5L886.6,446.9 M904.8,503.0L920.7,551.8 M871.3,442.4L882.0,475.3 M882.0,475.3L889.7,498.9 M896.2,519.1L908.8,557.8 M855.6,426.3L868.7,466.6 M877.1,492.6L890.3,533.1 M890.3,533.1L899.3,560.8 M840.3,411.8L845.9,428.9 M845.9,428.9L856.2,460.6 M856.2,460.6L861.6,477.2 M861.6,477.2L870.9,505.8 M870.9,505.8L887.5,557.1 M887.5,557.1L889.8,563.9 M829.5,415.3L846.3,466.9 M846.3,466.9L853.5,489.1 M863.2,519.1L873.0,549.2 M873.0,549.2L877.7,563.7 M877.7,563.7L878.9,567.5 M820.4,418.3L834.9,463.1 M834.9,463.1L851.6,514.4 M851.6,514.4L866.1,559.1 M807.6,422.4L825.6,477.5 M825.6,477.5L837.3,513.7 M990.4,363.0L977.9,367.1 M945.1,377.7L932.9,381.7 M917.8,386.6L891.2,395.3 M891.2,395.3L866.7,403.2 M866.7,403.2L854.3,407.2 M824.3,417.0L811.3,421.2 M811.3,421.2L800.2,424.8 M972.3,379.0L945.9,387.6 M945.9,387.6L932.2,392.0 M901.4,402.0L868.3,412.8 M868.3,412.8L847.7,419.5 M847.7,419.5L814.2,430.4 M814.2,430.4L803.1,434.0 M978.2,390.6L959.1,396.8 M959.1,396.8L921.6,409.0 M921.6,409.0L886.0,420.6 M852.3,431.5L828.1,439.4 M1000.8,395.0L973.2,403.9 M948.6,411.9L926.7,419.0 M916.6,422.3L879.4,434.4 M879.4,434.4L843.2,446.2 M843.2,446.2L810.6,456.8 M1004.5,406.6L987.4,412.1 M987.4,412.1L970.1,417.8 M970.1,417.8L934.3,429.4 M934.3,429.4L917.6,434.8 M917.6,434.8L895.7,441.9 M895.7,441.9L878.0,447.7 M850.0,456.8L823.5,465.4 M823.5,465.4L814.3,468.4 M970.3,429.6L952.4,435.5 M934.6,441.2L922.6,445.1 M922.6,445.1L889.1,456.0 M889.1,456.0L863.4,464.4 M863.4,464.4L848.1,469.3 M848.1,469.3L825.5,476.7 M825.5,476.7L817.8,479.2 M994.9,432.7L970.7,440.6 M944.5,449.1L925.0,455.5 M925.0,455.5L908.6,460.8 M908.6,460.8L885.1,468.4 M885.1,468.4L847.4,480.6 M1014.2,436.3L979.8,447.4 M979.8,447.4L968.5,451.1 M968.5,451.1L946.5,458.3 M933.8,462.4L897.0,474.4 M897.0,474.4L883.0,478.9 M883.0,478.9L863.5,485.2 M863.5,485.2L836.4,494.0 M836.4,494.0L824.0,498.1 M1018.1,448.3L987.4,458.3 M987.4,458.3L964.3,465.8 M964.3,465.8L934.6,475.5 M934.6,475.5L921.5,479.8 M921.5,479.8L911.8,482.9 M911.8,482.9L885.6,491.4 M885.6,491.4L848.6,503.4 M848.6,503.4L827.9,510.2 M1022.2,461.1L995.4,469.8 M995.4,469.8L973.0,477.1 M973.0,477.1L942.8,486.9 M942.8,486.9L922.2,493.6 M922.2,493.6L901.7,500.2 M901.7,500.2L869.7,510.6 M869.7,510.6L846.0,518.3 M846.0,518.3L832.0,522.9 M1025.2,470.3L999.3,478.7 M999.3,478.7L987.3,482.6 M987.3,482.6L968.5,488.7 M968.5,488.7L935.1,499.6 M935.1,499.6L919.8,504.6 M884.3,516.1L873.4,519.6 M873.4,519.6L849.7,527.3 M849.7,527.3L835.0,532.1 M1029.6,483.6L1005.3,491.5 M1005.3,491.5L976.2,500.9 M976.2,500.9L956.5,507.3 M956.5,507.3L937.0,513.7 M937.0,513.7L908.2,523.1 M908.2,523.1L895.8,527.1 M895.8,527.1L874.9,533.9 M874.9,533.9L849.0,542.3 M849.0,542.3L839.4,545.4 M1033.0,494.3L1005.7,503.1 M1005.7,503.1L986.4,509.4 M953.6,520.1L935.0,526.1 M935.0,526.1L901.9,536.9 M901.9,536.9L889.3,541.0 M889.3,541.0L860.1,550.5 M860.1,550.5L842.8,556.1 M1036.5,504.8L1022.5,509.4 M1022.5,509.4L998.4,517.2 M983.5,522.0L956.0,531.0 M956.0,531.0L936.4,537.3 M908.8,546.3L887.5,553.2 M887.5,553.2L869.2,559.2 M869.2,559.2L859.6,562.3 M859.6,562.3L846.3,566.6 M988.6,509.1L993.6,532.4 M993.6,532.4L1001.9,571.5 M1001.9,571.5L1011.1,614.6 M1011.1,614.6L1023.5,673.2 M1030.5,705.9L1035.1,727.5 M979.0,511.2L987.0,548.8 M987.0,548.8L995.9,590.5 M999.6,607.9L1009.9,656.5 M1009.9,656.5L1019.7,702.6 M1019.7,702.6L1024.4,724.8 M1024.4,724.8L1028.4,743.8 M1028.4,743.8L1028.9,745.9 M974.7,545.1L986.2,599.0 M986.2,599.0L998.3,655.9 M1007.2,697.9L1010.7,714.5 M1010.7,714.5L1017.9,748.3 M954.8,516.3L965.5,566.9 M965.5,566.9L974.3,608.1 M974.3,608.1L982.1,644.6 M982.1,644.6L987.4,669.9 M997.3,716.2L1003.3,744.5 M1003.3,744.5L1004.7,751.1 M944.8,518.4L949.5,540.7 M949.5,540.7L954.4,563.6 M954.4,563.6L960.2,591.1 M960.2,591.1L964.4,610.8 M964.4,610.8L971.2,642.5 M974.9,660.0L985.7,711.0 M935.8,520.3L945.2,564.2 M945.2,564.2L949.7,585.8 M949.7,585.8L953.7,604.5 M964.6,656.0L971.9,690.1 M982.6,740.2L985.7,755.1 M937.3,579.5L949.3,636.0 M949.3,636.0L954.5,660.7 M954.5,660.7L958.9,681.1 M958.9,681.1L964.4,707.2 M964.4,707.2L973.0,747.8 M973.0,747.8L975.1,757.4 M926.6,577.8L934.5,615.0 M934.5,615.0L940.2,641.6 M940.2,641.6L946.9,673.2 M946.9,673.2L955.3,712.9 M962.1,744.7L965.2,759.4 M914.3,570.7L922.7,610.1 M922.7,610.1L930.5,646.8 M930.5,646.8L934.2,664.4 M939.4,689.1L949.3,735.3 M949.3,735.3L954.9,761.6 M892.4,529.6L903.7,583.1 M903.7,583.1L908.1,603.6 M908.1,603.6L911.5,619.6 M911.5,619.6L920.8,663.4 M920.8,663.4L927.8,696.3 M937.5,741.7L942.3,764.3 M885.3,554.8L897.0,609.6 M910.2,672.1L915.2,695.5 M921.9,726.9L927.9,755.3 M927.9,755.3L930.4,766.9 M868.9,534.6L878.7,580.8 M878.7,580.8L885.9,614.6 M892.3,644.6L903.2,696.0 M909.0,723.3L918.8,769.3 M938.7,519.7L902.1,527.5 M902.1,527.5L889.7,530.1 M889.7,530.1L868.4,534.7 M868.4,534.7L861.5,536.1 M990.6,518.4L953.0,526.3 M953.0,526.3L916.0,534.2 M916.0,534.2L884.5,540.9 M884.5,540.9L863.4,545.4 M992.5,527.4L962.3,533.9 M962.3,533.9L937.4,539.1 M937.4,539.1L923.9,542.0 M923.9,542.0L912.9,544.4 M912.9,544.4L879.4,551.5 M879.4,551.5L865.4,554.4 M969.3,544.8L957.8,547.3 M917.0,555.9L886.5,562.4 M869.7,566.0L867.9,566.4 M997.9,552.7L977.8,557.0 M942.1,564.6L915.8,570.2 M915.8,570.2L882.0,577.3 M1000.5,564.8L973.1,570.6 M973.1,570.6L940.9,577.5 M940.9,577.5L927.7,580.2 M907.4,584.6L895.8,587.0 M895.8,587.0L880.2,590.3 M1002.7,575.2L979.1,580.2 M964.4,583.3L954.3,585.5 M922.5,592.2L891.7,598.8 M956.8,596.6L920.0,604.4 M920.0,604.4L891.8,610.4 M891.8,610.4L877.9,613.4 M993.3,599.3L960.8,606.2 M942.3,610.2L913.8,616.2 M1009.9,609.0L975.7,616.3 M956.3,620.4L922.3,627.6 M922.3,627.6L901.8,632.0 M901.8,632.0L882.7,636.0 M1012.0,619.0L1001.0,621.3 M1001.0,621.3L972.8,627.3 M972.8,627.3L942.3,633.8 M942.3,633.8L904.8,641.8 M957.4,641.3L934.6,646.2 M1016.9,642.2L982.0,649.6 M982.0,649.6L959.8,654.3 M959.8,654.3L930.6,660.5 M930.6,660.5L908.4,665.2 M908.4,665.2L889.8,669.2 M983.3,662.7L964.9,666.7 M964.9,666.7L938.6,672.3 M923.0,675.6L903.8,679.6 M903.8,679.6L892.5,682.0 M1022.4,668.1L984.0,676.2 M984.0,676.2L956.1,682.2 M956.1,682.2L944.5,684.6 M944.5,684.6L916.9,690.5 M916.9,690.5L895.3,695.1 M1024.8,679.2L996.0,685.3 M996.0,685.3L976.1,689.5 M965.6,691.8L935.9,698.1 M935.9,698.1L923.6,700.7 M923.6,700.7L902.9,705.1 M902.9,705.1L897.6,706.2 M1005.8,695.3L990.8,698.5 M964.9,704.0L929.8,711.5 M929.8,711.5L917.2,714.2 M917.2,714.2L900.1,717.8 M1029.7,702.3L1013.3,705.8 M1013.3,705.8L1000.2,708.6 M951.4,718.9L928.7,723.8 M928.7,723.8L902.7,729.3 M1001.6,722.5L967.5,729.8 M967.5,729.8L952.7,732.9 M952.7,732.9L926.4,738.5 M926.4,738.5L912.6,741.4 M1034.9,726.6L1024.6,728.7 M1024.6,728.7L1008.6,732.1 M1008.6,732.1L978.0,738.6 M978.0,738.6L942.2,746.3 M942.2,746.3L907.7,753.6 M1002.3,747.4L970.7,754.1 M970.7,754.1L938.5,760.9 M850.0,640.0L898.2,640.0 M901.1,653.3L950.0,653.3 M850.0,664.8L873.7,664.8 M873.7,664.8L926.4,664.8 M946.5,664.8L950.0,664.8 M850.0,675.9L889.9,675.9 M889.9,675.9L935.9,675.9 M935.9,675.9L950.0,675.9 M850.0,689.2L896.0,689.2 M850.0,701.2L871.8,701.2 M871.8,701.2L926.1,701.2 M942.7,701.2L950.0,701.2 M886.4,713.6L939.4,713.6 M939.4,713.6L950.0,713.6 M879.8,724.0L935.0,724.0 M850.0,736.2L886.0,736.2 M886.0,736.2L918.5,736.2 M918.5,736.2L933.8,736.2 M909.4,749.0L931.0,749.0 M931.0,749.0L950.0,749.0 M850.0,640.0L850.0,657.9 M850.0,657.9L850.0,683.7 M850.0,723.5L850.0,750.3 M850.0,750.3L850.0,760.0 M863.8,640.0L863.8,669.0 M863.8,669.0L863.8,687.5 M863.8,687.5L863.8,723.7 M863.8,723.7L863.8,754.1 M863.8,754.1L863.8,760.0 M876.9,640.0L876.9,669.1 M876.9,669.1L876.9,695.6 M876.9,695.6L876.9,707.4 M876.9,707.4L876.9,727.1 M876.9,727.1L876.9,751.5 M888.9,654.1L888.9,690.2 M888.9,690.2L888.9,713.6 M888.9,732.6L888.9,744.6 M888.9,744.6L888.9,760.0 M902.3,640.0L902.3,678.1 M902.3,678.1L902.3,715.8 M902.3,728.2L902.3,755.6 M902.3,755.6L902.3,760.0 M914.8,676.0L914.8,700.6 M914.8,700.6L914.8,718.9 M914.8,729.6L914.8,747.6 M914.8,747.6L914.8,760.0 M926.0,640.0L926.0,668.1 M926.0,697.5L926.0,729.5 M926.0,757.6L926.0,760.0 M938.1,654.1L938.1,680.2 M938.1,680.2L938.1,709.4 M938.1,709.4L938.1,725.8 M938.1,725.8L938.1,758.3 M938.1,758.3L938.1,760.0"/>
<path fill="none" stroke="#fcfbf6" stroke-width="2" d="M235.8,260.2L246.3,254.9 M246.3,254.9L256.4,249.7 M256.4,249.7L274.3,240.6 M274.3,240.6L299.2,228.0 M320.5,217.1L354.1,200.0 M389.4,182.0L405.1,174.0 M252.1,263.9L264.8,257.4 M264.8,257.4L276.1,251.6 M276.1,251.6L296.3,241.3 M296.3,241.3L321.0,228.8 M321.0,228.8L347.5,215.3 M347.5,215.3L365.2,206.2 M365.2,206.2L381.0,198.2 M381.0,198.2L410.0,183.4 M245.5,279.1L275.0,264.0 M275.0,264.0L296.1,253.3 M296.1,253.3L318.9,241.7 M331.4,235.3L353.0,224.3 M353.0,224.3L382.6,209.2 M382.6,209.2L414.8,192.8 M275.1,278.4L297.4,267.0 M297.4,267.0L311.2,260.0 M329.9,250.4L343.5,243.5 M377.0,226.4L386.7,221.5 M386.7,221.5L402.1,213.6 M402.1,213.6L420.6,204.2 M256.1,300.0L286.4,284.6 M286.4,284.6L304.0,275.6 M304.0,275.6L315.8,269.6 M315.8,269.6L326.5,264.2 M326.5,264.2L346.1,254.2 M346.1,254.2L356.6,248.8 M356.6,248.8L376.5,238.7 M376.5,238.7L410.7,221.3 M410.7,221.3L425.4,213.8 M260.8,309.2L281.3,298.8 M281.3,298.8L295.7,291.5 M295.7,291.5L321.8,278.2 M321.8,278.2L357.2,260.1 M381.4,247.8L413.4,231.5 M413.4,231.5L429.4,223.3 M429.4,223.3L430.1,223.0 M265.7,318.7L287.5,307.6 M287.5,307.6L300.8,300.8 M300.8,300.8L325.7,288.1 M325.7,288.1L350.1,275.7 M350.1,275.7L364.6,268.3 M364.6,268.3L383.1,258.9 M415.1,242.6L434.9,232.5 M376.8,273.9L390.2,267.0 M390.2,267.0L401.5,261.3 M401.5,261.3L435.0,244.2 M435.0,244.2L439.7,241.8 M274.6,336.2L289.8,328.5 M317.1,314.6L339.5,303.2 M359.9,292.7L369.4,287.9 M369.4,287.9L386.7,279.1 M386.7,279.1L398.9,272.9 M398.9,272.9L411.4,266.5 M411.4,266.5L425.1,259.5 M425.1,259.5L438.0,253.0 M279.5,345.8L301.6,334.5 M301.6,334.5L319.9,325.2 M319.9,325.2L354.7,307.5 M354.7,307.5L383.1,293.0 M383.1,293.0L396.8,286.1 M407.5,280.6L430.0,269.1 M430.0,269.1L448.8,259.6 M283.6,353.9L310.9,340.0 M310.9,340.0L334.3,328.0 M334.3,328.0L361.7,314.1 M361.7,314.1L394.0,297.6 M394.0,297.6L413.6,287.7 M413.6,287.7L433.7,277.4 M433.7,277.4L452.9,267.6 M288.6,363.7L301.3,357.3 M301.3,357.3L310.4,352.6 M310.4,352.6L344.0,335.5 M344.0,335.5L369.3,322.6 M384.6,314.8L396.6,308.7 M396.6,308.7L426.5,293.5 M426.5,293.5L436.7,288.3 M436.7,288.3L454.3,279.3 M454.3,279.3L457.9,277.5 M235.8,260.2L239.5,267.4 M239.5,267.4L251.6,291.2 M251.6,291.2L261.2,310.0 M261.2,310.0L267.2,321.7 M267.2,321.7L278.2,343.4 M278.2,343.4L289.0,364.5 M289.0,364.5L294.9,376.0 M246.9,254.6L253.7,268.0 M253.7,268.0L262.8,285.8 M262.8,285.8L272.5,304.9 M272.5,304.9L285.2,329.9 M285.2,329.9L296.1,351.2 M296.1,351.2L304.5,367.6 M304.5,367.6L305.9,370.4 M257.3,249.3L266.1,266.7 M266.1,266.7L277.9,289.8 M277.9,289.8L283.2,300.3 M283.2,300.3L291.5,316.4 M291.5,316.4L303.4,339.8 M315.7,363.9L316.3,365.1 M279.9,265.0L287.1,279.1 M287.1,279.1L296.0,296.4 M296.0,296.4L300.5,305.3 M300.5,305.3L314.1,332.0 M314.1,332.0L322.2,347.9 M322.2,347.9L327.9,359.2 M277.6,238.9L288.0,259.4 M288.0,259.4L296.9,276.7 M296.9,276.7L304.2,291.1 M311.6,305.7L317.3,316.8 M321.5,325.1L332.3,346.3 M332.3,346.3L336.6,354.8 M289.3,233.0L293.9,241.9 M293.9,241.9L306.1,265.8 M306.1,265.8L314.0,281.3 M314.0,281.3L323.8,300.5 M323.8,300.5L327.8,308.5 M327.8,308.5L335.1,322.8 M335.1,322.8L341.7,335.7 M341.7,335.7L348.4,348.8 M298.9,228.1L306.4,242.8 M319.3,268.0L332.6,294.2 M332.6,294.2L340.0,308.6 M346.9,322.2L357.9,343.9 M309.3,222.8L317.9,239.7 M329.1,261.6L338.6,280.4 M338.6,280.4L346.9,296.6 M346.9,296.6L354.7,311.8 M354.7,311.8L367.2,336.4 M367.2,336.4L368.3,338.6 M321.0,216.8L331.3,237.1 M339.0,252.1L349.4,272.6 M349.4,272.6L360.7,294.8 M360.7,294.8L365.5,304.2 M365.5,304.2L369.9,312.8 M374.6,322.0L380.0,332.7 M329.2,212.6L339.7,233.1 M348.1,249.7L358.7,270.4 M358.7,270.4L368.1,288.9 M368.1,288.9L379.9,312.1 M379.9,312.1L385.0,322.1 M341.7,206.3L348.0,218.8 M348.0,218.8L354.8,232.1 M354.8,232.1L367.0,256.0 M367.0,256.0L375.8,273.2 M375.8,273.2L379.9,281.3 M379.9,281.3L392.2,305.4 M392.2,305.4L400.7,322.1 M350.6,201.7L354.7,209.9 M354.7,209.9L362.1,224.4 M362.1,224.4L370.6,241.1 M370.6,241.1L377.9,255.4 M377.9,255.4L383.5,266.4 M392.7,284.4L399.5,297.7 M399.5,297.7L407.2,312.9 M407.2,312.9L409.6,317.6 M362.2,195.9L368.7,208.7 M368.7,208.7L380.3,231.6 M380.3,231.6L388.5,247.6 M388.5,247.6L396.6,263.4 M396.6,263.4L400.8,271.7 M372.8,190.4L378.3,201.1 M378.3,201.1L387.5,219.2 M387.5,219.2L396.1,236.1 M396.1,236.1L406.5,256.5 M406.5,256.5L412.2,267.7 M412.2,267.7L417.3,277.7 M423.0,288.9L427.6,297.9 M427.6,297.9L431.8,306.2 M383.8,184.8L390.0,197.0 M400.5,217.6L404.7,225.8 M404.7,225.8L408.7,233.8 M408.7,233.8L415.3,246.7 M415.3,246.7L424.7,265.2 M434.0,283.3L442.8,300.7 M395.6,178.8L400.7,188.9 M400.7,188.9L414.1,215.3 M414.1,215.3L418.1,223.1 M418.1,223.1L428.1,242.7 M437.2,260.6L445.5,276.8 M445.5,276.8L453.4,292.4 M453.4,292.4L454.6,294.7 M404.1,174.5L417.0,199.7 M417.0,199.7L430.0,225.2 M430.0,225.2L436.5,238.1 M436.5,238.1L447.6,259.9 M460.6,285.3L463.1,290.3" clip-path="url(#jc)"/>
<clipPath id="jc"><path d="M286,240 L300,222 L335,222 L350,240 L425,268 L470,300 L440,330 L400,330 L340,322 L300,306 L284,290 Z"/></clipPath>
<g fill="none" stroke="#fbfaf5" stroke-width="2">
<path d="M14,207 L51,258 L81,302 L92,324 L87,379 L68,490 L66,500"/>
<path d="M85,520 L221,668 L234,738"/>
<path d="M0,646 L6,646 L95,712 L139,682 L161,686 L177,701 L221,736 L234,738"/>
</g>
<g fill="none" stroke="#f6c466" stroke-width="3.2" stroke-linejoin="round">
<path d="M0,350 L14,339 L23,336 L58,318 L81,304 L97,293 L147,290 L161,293 L207,297 L234,272"/>
<path d="M147,290 L147,256"/>
<path d="M95,712 L38,760"/>
</g>
<g font-family="Liberation Sans" font-size="10" fill="#333" text-anchor="middle">
<rect x="182" y="299.5" width="17" height="11" fill="#fff" stroke="#555"/><text x="190.5" y="308.5">70</text>
<rect x="41.5" y="320.5" width="17" height="11" fill="#fff" stroke="#555"/><text x="50" y="329.5">70</text>
<rect x="-10" y="347.5" width="17" height="11" fill="#fff" stroke="#555"/>
</g>
<g fill="#b7d3fd">
<path d="M368,207 L369,220 C375,226 382,229 392,227 L410,223 C418,220 424,214 427,207 Z"/>
<path d="M536,207 L534,222 C537,235 536,255 535,270 C536,282 545,290 560,291 L590,292 C605,290 615,287 620,285.6 L632,281 L644,278.5 L653,271 L659,263 L664,255 L665,244 L660,235 L665,227.5 L676,224 L686,225 L696,225 L701,227.5 L703,239.4 L718,233.4 L729,226 L738.5,215.7 L740,207 Z"/>
<path d="M820,207 L829,212.5 L836,219 L842.5,230 L850,239 L859,246 L875,253.5 L888,252.5 L895,250 L912,246 L925,242.5 L937,241 L947.5,240 L944,247.5 L941,257.5 L935,288 L930,330 L930,362 L935,380 L944,400 L950,442 L960,482 L979,509 L981,536 L990,562 L998,602 L1003,641 L1003,662 L1018,684 L1026,716 L1035,747 L1040,760 L1264,760 L1264,207 Z"/>
</g>
<g fill="#b5bd8a"><rect x="624" y="281" width="8" height="4"/><rect x="723" y="237" width="6" height="5"/><rect x="938" y="542" width="10" height="3"/></g>
<g fill="none" stroke="#fbfaf5" stroke-width="2.2" stroke-linejoin="round">
<path d="M322,317 L322,337 L369,374 L435,448 L520,442"/>
<path d="M369,374 L418,317 L431,287 L445,258"/>
<path d="M426,234 L438,223 L481,227 L481,256 M426,234 L434.6,256.4 L450,254.7 L500,260 M443,223 L452,255.5 M464,224.6 L471,254.7 M452,255.5 L441.5,282 L427.8,306 L414,330 M486,260 L458.7,278.7 M445,272 L500,292.5 M434.6,256.4 L422.6,263 L414,284 L398.6,306 L383,330 M452,244 L440,250 M360,244 L395,228 L420,226"/>
<path d="M436,450 L523,440"/>
<path d="M537,440 L560,456 L556,476 L629,483"/>
<path d="M492,598 L546,599 L550,563 L566,555 L576,542 L599,535 L625,512"/>
<path d="M797,491 L817,499 L883,483"/>
<path d="M876,650 L889,624 L896,618 L940,610"/>
<path d="M395,697 L395,644 L456,644 L487,647 M476,647 L476,697 L395,697"/>
<path d="M494,597 L547,598 L547,566 L555,560"/>
<path d="M250,758 L297,760 L337,756 L350,758"/>
<path d="M293,212 L320,228 M300,236 L320,242 M270,250 L300,245"/>
<path d="M518,207 L518,250 L505,262 L490,290 M518,250 L540,258"/>
</g>
<g fill="none" stroke="#f6c466" stroke-width="3.6" stroke-linejoin="round" stroke-linecap="round">
<path d="M300,207 L279,216 L268,230 L262,246 L260,262 L264,278 L275,291 L295,302 L318,312 L345,317 L363,321 L405,332 L481,350 L550,378 L563,383 L612,382 L766,382 L900,382 L928,381"/>
<path d="M250,262 L295,262 L325,266"/>
<path d="M311,207 L325,223 L347,234 C365,245 380,254 395,262 L420,273 L472,302 L522,306 L605,308 L640,298 L652,294 L703,266 L734,246 L752,213 L755,207"/>
<path d="M347,234 L334,246 L329,249"/>
<path d="M480,333 L600,331 L765,319 L860,303 C880,290 895,284 913,283 L929,285"/>
<path d="M488,290 L486,350 L480,368"/>
<path d="M603,300 L603,395 L591,405 L558,416 L544,430 L526,463 L498,510 L492,545 L491,760"/>
<path d="M813,207 L846,246 L862,272 L867,290 L881,306 L913,356 L926,385 L939,422 L955,485 L964,523 L967,549 L970,623 L972,660 L963,695 L959,726 L969,760"/>
<path d="M799,527 L822,521 L838,523 L860,536 L878,538 L884,554 L902,571 L919,567"/>
<path d="M788,526 L784,552 L824,595 L876,650 L876,760"/>
</g>
<g fill="none" stroke="#e98d58" stroke-width="4.3" stroke-linejoin="round" stroke-linecap="round">
<path d="M551,378 L576,391 L598,402 L620,416 L630,438 L632,466 L627,499 L634,511 L656,517 L684,522 L727,519 L763,524 L800,527"/>
<path d="M763,220 L761,271 L768,310 L778,353 L781,380 L784,402 L787,434 L800,460 L812,491 L800,519 L790,527"/>
<path d="M781,222 L805,266 L828,305 L839,330 L860,380 L875,423 L885,470 L900,531 L906,545 L927,586 L940,660 L945,705 L938,760"/>
</g>
<g font-family="Liberation Sans" font-size="10" fill="#333" text-anchor="middle"><rect x="266.8" y="217.0" width="12.5" height="12" fill="#fff" stroke="#555" stroke-width="1.1"/><text x="273.0" y="226.6">6</text><rect x="370.0" y="249.0" width="18.0" height="12" fill="#fff" stroke="#555" stroke-width="1.1"/><text x="379.0" y="258.6">80</text><rect x="511.0" y="299.5" width="18.0" height="12" fill="#fff" stroke="#555" stroke-width="1.1"/><text x="520.0" y="309.1">80</text><rect x="400.2" y="325.0" width="12.5" height="12" fill="#fff" stroke="#555" stroke-width="1.1"/><text x="406.5" y="334.6">6</text><rect x="503.2" y="326.0" width="12.5" height="12" fill="#fff" stroke="#555" stroke-width="1.1"/><text x="509.5" y="335.6">5</text><rect x="540.8" y="326.0" width="12.5" height="12" fill="#fff" stroke="#555" stroke-width="1.1"/><text x="547.0" y="335.6">5</text><rect x="593.8" y="376.0" width="12.5" height="12" fill="#fff" stroke="#555" stroke-width="1.1"/><text x="600.0" y="385.6">6</text><rect x="729.0" y="234.5" width="18.0" height="12" fill="#fff" stroke="#555" stroke-width="1.1"/><text x="738.0" y="244.1">80</text><rect x="773.0" y="217.5" width="12.5" height="12" fill="#fff" stroke="#555" stroke-width="1.1"/><text x="779.3" y="227.1">1</text><rect x="768.8" y="242.5" width="12.5" height="12" fill="#fff" stroke="#555" stroke-width="1.1"/><text x="775.0" y="252.1">2</text><rect x="767.1" y="263.0" width="12.5" height="12" fill="#fff" stroke="#555" stroke-width="1.1"/><text x="773.4" y="272.6">3</text><rect x="657.2" y="306.0" width="12.5" height="12" fill="#fff" stroke="#555" stroke-width="1.1"/><text x="663.5" y="315.6">4</text><rect x="753.0" y="284.0" width="18.0" height="12" fill="#fff" stroke="#555" stroke-width="1.1"/><text x="762.0" y="293.6">50</text><rect x="777.2" y="286.0" width="12.5" height="12" fill="#fff" stroke="#555" stroke-width="1.1"/><text x="783.5" y="295.6">4</text><rect x="757.2" y="312.5" width="12.5" height="12" fill="#fff" stroke="#555" stroke-width="1.1"/><text x="763.5" y="322.1">5</text><rect x="711.6" y="337.0" width="23.5" height="12" fill="#fff" stroke="#555" stroke-width="1.1"/><text x="723.4" y="346.6">502</text><rect x="717.6" y="357.0" width="18.0" height="12" fill="#fff" stroke="#555" stroke-width="1.1"/><text x="726.6" y="366.6">60</text><rect x="681.2" y="362.0" width="23.5" height="12" fill="#fff" stroke="#555" stroke-width="1.1"/><text x="693.0" y="371.6">601</text><rect x="759.8" y="376.6" width="12.5" height="12" fill="#fff" stroke="#555" stroke-width="1.1"/><text x="766.0" y="386.2">6</text><rect x="758.0" y="399.7" width="18.0" height="12" fill="#fff" stroke="#555" stroke-width="1.1"/><text x="767.0" y="409.3">50</text><rect x="859.0" y="246.5" width="18.0" height="12" fill="#fff" stroke="#555" stroke-width="1.1"/><text x="868.0" y="256.1">25</text><rect x="858.4" y="282.0" width="18.0" height="12" fill="#fff" stroke="#555" stroke-width="1.1"/><text x="867.4" y="291.6">30</text><rect x="899.2" y="304.0" width="23.5" height="12" fill="#fff" stroke="#555" stroke-width="1.1"/><text x="911.0" y="313.6">302</text><rect x="858.0" y="398.7" width="18.0" height="12" fill="#fff" stroke="#555" stroke-width="1.1"/><text x="867.0" y="408.3">40</text><rect x="923.0" y="398.5" width="18.0" height="12" fill="#fff" stroke="#555" stroke-width="1.1"/><text x="932.0" y="408.1">30</text><rect x="897.2" y="413.5" width="23.5" height="12" fill="#fff" stroke="#555" stroke-width="1.1"/><text x="909.0" y="423.1">207</text><rect x="623.4" y="500.0" width="12.5" height="12" fill="#fff" stroke="#555" stroke-width="1.1"/><text x="629.6" y="509.6">7</text><rect x="821.8" y="514.6" width="12.5" height="12" fill="#fff" stroke="#555" stroke-width="1.1"/><text x="828.0" y="524.2">7</text><rect x="932.5" y="519.0" width="12.5" height="12" fill="#fff" stroke="#555" stroke-width="1.1"/><text x="938.8" y="528.6">7</text><rect x="922.1" y="534.5" width="23.5" height="12" fill="#fff" stroke="#555" stroke-width="1.1"/><text x="933.9" y="544.1">303</text><rect x="915.0" y="581.0" width="18.0" height="12" fill="#fff" stroke="#555" stroke-width="1.1"/><text x="924.0" y="590.6">40</text><rect x="822.0" y="596.0" width="18.0" height="12" fill="#fff" stroke="#555" stroke-width="1.1"/><text x="831.0" y="605.6">51</text><rect x="895.9" y="608.0" width="23.5" height="12" fill="#fff" stroke="#555" stroke-width="1.1"/><text x="907.6" y="617.6">211</text><rect x="908.2" y="662.0" width="23.5" height="12" fill="#fff" stroke="#555" stroke-width="1.1"/><text x="920.0" y="671.6">212</text><rect x="952.0" y="704.5" width="18.0" height="12" fill="#fff" stroke="#555" stroke-width="1.1"/><text x="961.0" y="714.1">30</text></g>
<g font-family="Liberation Sans" fill="#5d4141" text-anchor="middle" stroke="#fff" stroke-opacity="0.7" stroke-width="2" paint-order="stroke"><text x="327" y="261.5" font-size="15.5" font-weight="normal">Al Jahra</text><text x="554" y="298" font-size="12" font-weight="normal">Sulaibikhat</text><text x="534" y="349" font-size="9.5" font-weight="bold">SULAIBIYA</text><text x="617" y="352" font-size="13" font-weight="normal">Firdous</text><text x="663" y="342" font-size="12" font-weight="normal">Ardiya</text><text x="663" y="224" font-size="12" font-weight="normal">Kuwait Free</text><text x="663" y="236" font-size="12" font-weight="normal">Trade Zone</text><text x="834" y="260" font-size="11.5" font-weight="normal">Hawally</text><text x="905" y="265" font-size="14" font-weight="normal">Salmiya</text><text x="876" y="328" font-size="9.5" font-weight="bold">BAYAN</text><text x="915" y="331" font-size="9.5" font-weight="bold">SALWA</text><text x="763" y="357" font-size="9.5" font-weight="bold">KHAITAN</text><text x="712" y="385" font-size="11" font-weight="bold">JELEEB</text><text x="712" y="397" font-size="11" font-weight="bold">AL-SHUYOUKH</text><text x="914" y="486" font-size="9.5" font-weight="bold">AL-QURAIN</text><text x="914" y="497" font-size="9.5" font-weight="bold">DISTRICT</text><text x="975" y="576" font-size="9.5" font-weight="bold">MAHBOULA</text><text x="983" y="612" font-size="9.5" font-weight="bold">ABU HALIFA</text><text x="983" y="646" font-size="13.5" font-weight="normal">Mangaf</text><text x="912" y="686" font-size="12" font-weight="normal">Ahmadi</text><text x="988" y="688" font-size="9.5" font-weight="bold">FAHAHEEL</text></g>
<path fill="none" stroke="#fff" stroke-opacity="0.5" stroke-width="3.2" stroke-linecap="round" d="M351.0,278.0 C350.0,281.5 346.0,281.5 345.0,277.0 M345.0,278.0 Q343.5,275.5 342.0,278.0 Q340.5,275.5 339.0,278.0 Q337.5,275.5 336.0,278.0 L332.0,278.0 Q331.0,274.0 329.0,274.5 Q327.0,276.0 329.0,278.0 L327.0,278.0 Q325.5,275.5 324.0,278.0 L320.0,278.0 Q318.5,275.5 317.0,278.0 C316.0,281.5 312.0,281.5 311.0,277.0 M311.0,278.0 L307.0,278.0 L306.0,278.0 L306.0,265.0 M306.0,278.0 M304.5,278.0 L300.5,278.0 M334.5,282.0 L335.5,282.0 M305.4,282.0 L306.4,282.0 M319.0,282.0 L320.0,282.0 M575.0,310.0 L574.0,310.0 L574.0,301.0 M574.0,310.0 M572.5,310.0 Q571.0,307.5 569.5,310.0 Q568.5,306.0 566.5,306.5 Q564.5,308.0 566.5,310.0 L564.5,310.0 Q563.0,307.5 561.5,310.0 Q560.5,306.0 558.5,306.5 Q556.5,308.0 558.5,310.0 L556.5,310.0 Q555.0,307.5 553.5,310.0 Q552.0,307.5 550.5,310.0 C549.5,313.5 545.5,313.5 544.5,309.0 M544.5,310.0 Q543.0,307.5 541.5,310.0 C540.5,313.5 536.5,313.5 535.5,309.0 M535.5,310.0 Q534.5,306.0 532.5,306.5 Q530.5,308.0 532.5,310.0 L530.5,310.0 M558.0,314.0 L559.0,314.0 M552.4,314.0 L553.4,314.0 M534.4,314.0 L535.4,314.0 M549.0,359.0 C548.0,362.5 544.0,362.5 543.0,358.0 M543.0,359.0 Q541.5,356.5 540.0,359.0 C539.0,362.5 535.0,362.5 534.0,358.0 M534.0,359.0 Q532.5,356.5 531.0,359.0 C530.0,362.5 526.0,362.5 525.0,358.0 M525.0,359.0 L524.0,359.0 L524.0,352.0 M524.0,359.0 M522.5,359.0 L521.5,359.0 L521.5,352.0 M521.5,359.0 M520.0,359.0 C519.0,362.5 515.0,362.5 514.0,358.0 M514.0,359.0 M523.9,363.0 L524.9,363.0 M524.1,363.0 L525.1,363.0 M637.0,364.0 L633.0,364.0 L632.0,364.0 L632.0,355.0 M632.0,364.0 M630.5,364.0 Q629.5,360.0 627.5,360.5 Q625.5,362.0 627.5,364.0 L625.5,364.0 L621.5,364.0 L620.5,364.0 L620.5,355.0 M620.5,364.0 M619.0,364.0 Q617.5,361.5 616.0,364.0 Q614.5,361.5 613.0,364.0 L609.0,364.0 Q607.5,361.5 606.0,364.0 L605.0,364.0 L605.0,355.0 M605.0,364.0 M603.5,364.0 C602.5,367.5 598.5,367.5 597.5,363.0 M597.5,364.0 Q596.0,361.5 594.5,364.0 M615.7,368.0 L616.7,368.0 M603.6,368.0 L604.6,368.0 M682.0,354.0 C681.0,357.5 677.0,357.5 676.0,353.0 M676.0,354.0 C675.0,357.5 671.0,357.5 670.0,353.0 M670.0,354.0 L669.0,354.0 L669.0,345.0 M669.0,354.0 M667.5,354.0 Q666.0,351.5 664.5,354.0 L663.5,354.0 L663.5,345.0 M663.5,354.0 M662.0,354.0 Q660.5,351.5 659.0,354.0 Q657.5,351.5 656.0,354.0 Q654.5,351.5 653.0,354.0 L649.0,354.0 C648.0,357.5 644.0,357.5 643.0,353.0 M643.0,354.0 M677.8,358.0 L678.8,358.0 M644.6,358.0 L645.6,358.0 M688.0,248.0 L684.0,248.0 L683.0,248.0 L683.0,238.0 M683.0,248.0 M681.5,248.0 Q680.5,244.0 678.5,244.5 Q676.5,246.0 678.5,248.0 L676.5,248.0 C675.5,251.5 671.5,251.5 670.5,247.0 M670.5,248.0 C669.5,251.5 665.5,251.5 664.5,247.0 M664.5,248.0 Q663.0,245.5 661.5,248.0 Q660.5,244.0 658.5,244.5 Q656.5,246.0 658.5,248.0 L656.5,248.0 Q655.0,245.5 653.5,248.0 Q652.0,245.5 650.5,248.0 Q649.0,245.5 647.5,248.0 L646.5,248.0 L646.5,238.0 M646.5,248.0 M645.0,248.0 C644.0,251.5 640.0,251.5 639.0,247.0 M639.0,248.0 Q637.5,245.5 636.0,248.0 M682.5,252.0 L683.5,252.0 M642.2,252.0 L643.2,252.0 M666.9,252.0 L667.9,252.0 M809.0,214.0 Q807.5,211.5 806.0,214.0 C805.0,217.5 801.0,217.5 800.0,213.0 M800.0,214.0 Q799.0,210.0 797.0,210.5 Q795.0,212.0 797.0,214.0 L795.0,214.0 Q794.0,210.0 792.0,210.5 Q790.0,212.0 792.0,214.0 L790.0,214.0 Q788.5,211.5 787.0,214.0 Q785.5,211.5 784.0,214.0 C783.0,217.5 779.0,217.5 778.0,213.0 M778.0,214.0 L774.0,214.0 Q772.5,211.5 771.0,214.0 C770.0,217.5 766.0,217.5 765.0,213.0 M765.0,214.0 C764.0,217.5 760.0,217.5 759.0,213.0 M759.0,214.0 Q758.0,210.0 756.0,210.5 Q754.0,212.0 756.0,214.0 L754.0,214.0 L753.0,214.0 L753.0,202.0 M753.0,214.0 M751.5,214.0 Q750.5,210.0 748.5,210.5 Q746.5,212.0 748.5,214.0 L746.5,214.0 L745.5,214.0 L745.5,202.0 M745.5,214.0 M744.0,214.0 L740.0,214.0 Q738.5,211.5 737.0,214.0 L733.0,214.0 L732.0,214.0 L732.0,202.0 M732.0,214.0 M730.5,214.0 L729.5,214.0 L729.5,202.0 M729.5,214.0 M728.0,214.0 Q726.5,211.5 725.0,214.0 Q723.5,211.5 722.0,214.0 Q721.0,210.0 719.0,210.5 Q717.0,212.0 719.0,214.0 L717.0,214.0 M780.7,218.0 L781.7,218.0 M734.3,218.0 L735.3,218.0 M751.3,218.0 L752.3,218.0 M733.4,218.0 L734.4,218.0 M738.4,218.0 L739.4,218.0 M740.3,218.0 L741.3,218.0 M849.0,275.0 L848.0,275.0 L848.0,265.0 M848.0,275.0 M846.5,275.0 L842.5,275.0 L838.5,275.0 Q837.5,271.0 835.5,271.5 Q833.5,273.0 835.5,275.0 L833.5,275.0 L832.5,275.0 L832.5,265.0 M832.5,275.0 M831.0,275.0 L830.0,275.0 L830.0,265.0 M830.0,275.0 M828.5,275.0 Q827.5,271.0 825.5,271.5 Q823.5,273.0 825.5,275.0 L823.5,275.0 L819.5,275.0 Q818.5,271.0 816.5,271.5 Q814.5,273.0 816.5,275.0 L814.5,275.0 M838.1,279.0 L839.1,279.0 M825.0,279.0 L826.0,279.0 M930.0,279.0 C929.0,282.5 925.0,282.5 924.0,278.0 M924.0,279.0 Q923.0,275.0 921.0,275.5 Q919.0,277.0 921.0,279.0 L919.0,279.0 Q918.0,275.0 916.0,275.5 Q914.0,277.0 916.0,279.0 L914.0,279.0 Q912.5,276.5 911.0,279.0 Q910.0,275.0 908.0,275.5 Q906.0,277.0 908.0,279.0 L906.0,279.0 L905.0,279.0 L905.0,266.0 M905.0,279.0 M903.5,279.0 Q902.0,276.5 900.5,279.0 L896.5,279.0 C895.5,282.5 891.5,282.5 890.5,278.0 M890.5,279.0 Q889.5,275.0 887.5,275.5 Q885.5,277.0 887.5,279.0 L885.5,279.0 Q884.0,276.5 882.5,279.0 Q881.5,275.0 879.5,275.5 Q877.5,277.0 879.5,279.0 L877.5,279.0 M926.7,283.0 L927.7,283.0 M925.0,283.0 L926.0,283.0 M916.7,283.0 L917.7,283.0 M883.0,339.0 Q882.0,335.0 880.0,335.5 Q878.0,337.0 880.0,339.0 L878.0,339.0 Q877.0,335.0 875.0,335.5 Q873.0,337.0 875.0,339.0 L873.0,339.0 C872.0,342.5 868.0,342.5 867.0,338.0 M867.0,339.0 M875.1,343.0 L876.1,343.0 M924.0,341.0 Q923.0,337.0 921.0,337.5 Q919.0,339.0 921.0,341.0 L919.0,341.0 Q918.0,337.0 916.0,337.5 Q914.0,339.0 916.0,341.0 L914.0,341.0 L910.0,341.0 Q908.5,338.5 907.0,341.0 L903.0,341.0 M915.6,345.0 L916.6,345.0 M737.0,409.0 L733.0,409.0 Q731.5,406.5 730.0,409.0 L726.0,409.0 Q725.0,405.0 723.0,405.5 Q721.0,407.0 723.0,409.0 L721.0,409.0 Q719.5,406.5 718.0,409.0 Q717.0,405.0 715.0,405.5 Q713.0,407.0 715.0,409.0 L713.0,409.0 Q711.5,406.5 710.0,409.0 Q708.5,406.5 707.0,409.0 L706.0,409.0 L706.0,400.0 M706.0,409.0 M704.5,409.0 Q703.0,406.5 701.5,409.0 L700.5,409.0 L700.5,400.0 M700.5,409.0 M699.0,409.0 L695.0,409.0 C694.0,412.5 690.0,412.5 689.0,408.0 M689.0,409.0 Q688.0,405.0 686.0,405.5 Q684.0,407.0 686.0,409.0 L684.0,409.0 M706.6,413.0 L707.6,413.0 M726.2,413.0 L727.2,413.0 M726.7,413.0 L727.7,413.0 M785.0,366.0 C784.0,369.5 780.0,369.5 779.0,365.0 M779.0,366.0 L775.0,366.0 Q774.0,362.0 772.0,362.5 Q770.0,364.0 772.0,366.0 L770.0,366.0 L769.0,366.0 L769.0,358.0 M769.0,366.0 M767.5,366.0 Q766.0,363.5 764.5,366.0 C763.5,369.5 759.5,369.5 758.5,365.0 M758.5,366.0 Q757.5,362.0 755.5,362.5 Q753.5,364.0 755.5,366.0 L753.5,366.0 L752.5,366.0 L752.5,358.0 M752.5,366.0 M751.0,366.0 M771.2,370.0 L772.2,370.0 M779.4,370.0 L780.4,370.0 M926.0,505.0 Q925.0,501.0 923.0,501.5 Q921.0,503.0 923.0,505.0 L921.0,505.0 Q919.5,502.5 918.0,505.0 L917.0,505.0 L917.0,498.0 M917.0,505.0 M915.5,505.0 Q914.0,502.5 912.5,505.0 Q911.0,502.5 909.5,505.0 Q908.5,501.0 906.5,501.5 Q904.5,503.0 906.5,505.0 L904.5,505.0 L903.5,505.0 L903.5,498.0 M903.5,505.0 M902.0,505.0 M916.5,509.0 L917.5,509.0 M981.0,585.0 L980.0,585.0 L980.0,578.0 M980.0,585.0 M978.5,585.0 L977.5,585.0 L977.5,578.0 M977.5,585.0 M976.0,585.0 Q974.5,582.5 973.0,585.0 L972.0,585.0 L972.0,578.0 M972.0,585.0 M970.5,585.0 Q969.5,581.0 967.5,581.5 Q965.5,583.0 967.5,585.0 L965.5,585.0 C964.5,588.5 960.5,588.5 959.5,584.0 M959.5,585.0 Q958.0,582.5 956.5,585.0 Q955.0,582.5 953.5,585.0 M962.0,589.0 L963.0,589.0 M1001.0,622.0 Q1000.0,618.0 998.0,618.5 Q996.0,620.0 998.0,622.0 L996.0,622.0 L995.0,622.0 L995.0,615.0 M995.0,622.0 M993.5,622.0 C992.5,625.5 988.5,625.5 987.5,621.0 M987.5,622.0 Q986.5,618.0 984.5,618.5 Q982.5,620.0 984.5,622.0 L982.5,622.0 Q981.0,619.5 979.5,622.0 C978.5,625.5 974.5,625.5 973.5,621.0 M973.5,622.0 Q972.0,619.5 970.5,622.0 Q969.5,618.0 967.5,618.5 Q965.5,620.0 967.5,622.0 L965.5,622.0 Q964.0,619.5 962.5,622.0 M974.8,626.0 L975.8,626.0 M999.5,626.0 L1000.5,626.0 M994.0,660.0 L993.0,660.0 L993.0,652.0 M993.0,660.0 M991.5,660.0 Q990.0,657.5 988.5,660.0 L984.5,660.0 C983.5,663.5 979.5,663.5 978.5,659.0 M978.5,660.0 L974.5,660.0 L973.5,660.0 L973.5,652.0 M973.5,660.0 M972.0,660.0 L971.0,660.0 L971.0,652.0 M971.0,660.0 M969.5,660.0 L965.5,660.0 M980.2,664.0 L981.2,664.0 M993.7,664.0 L994.7,664.0 M928.0,697.0 Q926.5,694.5 925.0,697.0 Q924.0,693.0 922.0,693.5 Q920.0,695.0 922.0,697.0 L920.0,697.0 Q918.5,694.5 917.0,697.0 C916.0,700.5 912.0,700.5 911.0,696.0 M911.0,697.0 Q909.5,694.5 908.0,697.0 Q906.5,694.5 905.0,697.0 L901.0,697.0 L900.0,697.0 L900.0,689.0 M900.0,697.0 M898.5,697.0 Q897.5,693.0 895.5,693.5 Q893.5,695.0 895.5,697.0 L893.5,697.0 M904.0,701.0 L905.0,701.0 M907.3,701.0 L908.3,701.0 M1005.0,698.0 Q1003.5,695.5 1002.0,698.0 C1001.0,701.5 997.0,701.5 996.0,697.0 M996.0,698.0 L992.0,698.0 C991.0,701.5 987.0,701.5 986.0,697.0 M986.0,698.0 L985.0,698.0 L985.0,691.0 M985.0,698.0 M983.5,698.0 L979.5,698.0 L975.5,698.0 C974.5,701.5 970.5,701.5 969.5,697.0 M969.5,698.0 M973.6,702.0 L974.6,702.0 M992.2,702.0 L993.2,702.0"/>
<path fill="none" stroke="#5d4141" stroke-width="1.15" stroke-linecap="round" stroke-linejoin="round" d="M351.0,278.0 C350.0,281.5 346.0,281.5 345.0,277.0 M345.0,278.0 Q343.5,275.5 342.0,278.0 Q340.5,275.5 339.0,278.0 Q337.5,275.5 336.0,278.0 L332.0,278.0 Q331.0,274.0 329.0,274.5 Q327.0,276.0 329.0,278.0 L327.0,278.0 Q325.5,275.5 324.0,278.0 L320.0,278.0 Q318.5,275.5 317.0,278.0 C316.0,281.5 312.0,281.5 311.0,277.0 M311.0,278.0 L307.0,278.0 L306.0,278.0 L306.0,265.0 M306.0,278.0 M304.5,278.0 L300.5,278.0 M334.5,282.0 L335.5,282.0 M305.4,282.0 L306.4,282.0 M319.0,282.0 L320.0,282.0 M575.0,310.0 L574.0,310.0 L574.0,301.0 M574.0,310.0 M572.5,310.0 Q571.0,307.5 569.5,310.0 Q568.5,306.0 566.5,306.5 Q564.5,308.0 566.5,310.0 L564.5,310.0 Q563.0,307.5 561.5,310.0 Q560.5,306.0 558.5,306.5 Q556.5,308.0 558.5,310.0 L556.5,310.0 Q555.0,307.5 553.5,310.0 Q552.0,307.5 550.5,310.0 C549.5,313.5 545.5,313.5 544.5,309.0 M544.5,310.0 Q543.0,307.5 541.5,310.0 C540.5,313.5 536.5,313.5 535.5,309.0 M535.5,310.0 Q534.5,306.0 532.5,306.5 Q530.5,308.0 532.5,310.0 L530.5,310.0 M558.0,314.0 L559.0,314.0 M552.4,314.0 L553.4,314.0 M534.4,314.0 L535.4,314.0 M549.0,359.0 C548.0,362.5 544.0,362.5 543.0,358.0 M543.0,359.0 Q541.5,356.5 540.0,359.0 C539.0,362.5 535.0,362.5 534.0,358.0 M534.0,359.0 Q532.5,356.5 531.0,359.0 C530.0,362.5 526.0,362.5 525.0,358.0 M525.0,359.0 L524.0,359.0 L524.0,352.0 M524.0,359.0 M522.5,359.0 L521.5,359.0 L521.5,352.0 M521.5,359.0 M520.0,359.0 C519.0,362.5 515.0,362.5 514.0,358.0 M514.0,359.0 M523.9,363.0 L524.9,363.0 M524.1,363.0 L525.1,363.0 M637.0,364.0 L633.0,364.0 L632.0,364.0 L632.0,355.0 M632.0,364.0 M630.5,364.0 Q629.5,360.0 627.5,360.5 Q625.5,362.0 627.5,364.0 L625.5,364.0 L621.5,364.0 L620.5,364.0 L620.5,355.0 M620.5,364.0 M619.0,364.0 Q617.5,361.5 616.0,364.0 Q614.5,361.5 613.0,364.0 L609.0,364.0 Q607.5,361.5 606.0,364.0 L605.0,364.0 L605.0,355.0 M605.0,364.0 M603.5,364.0 C602.5,367.5 598.5,367.5 597.5,363.0 M597.5,364.0 Q596.0,361.5 594.5,364.0 M615.7,368.0 L616.7,368.0 M603.6,368.0 L604.6,368.0 M682.0,354.0 C681.0,357.5 677.0,357.5 676.0,353.0 M676.0,354.0 C675.0,357.5 671.0,357.5 670.0,353.0 M670.0,354.0 L669.0,354.0 L669.0,345.0 M669.0,354.0 M667.5,354.0 Q666.0,351.5 664.5,354.0 L663.5,354.0 L663.5,345.0 M663.5,354.0 M662.0,354.0 Q660.5,351.5 659.0,354.0 Q657.5,351.5 656.0,354.0 Q654.5,351.5 653.0,354.0 L649.0,354.0 C648.0,357.5 644.0,357.5 643.0,353.0 M643.0,354.0 M677.8,358.0 L678.8,358.0 M644.6,358.0 L645.6,358.0 M688.0,248.0 L684.0,248.0 L683.0,248.0 L683.0,238.0 M683.0,248.0 M681.5,248.0 Q680.5,244.0 678.5,244.5 Q676.5,246.0 678.5,248.0 L676.5,248.0 C675.5,251.5 671.5,251.5 670.5,247.0 M670.5,248.0 C669.5,251.5 665.5,251.5 664.5,247.0 M664.5,248.0 Q663.0,245.5 661.5,248.0 Q660.5,244.0 658.5,244.5 Q656.5,246.0 658.5,248.0 L656.5,248.0 Q655.0,245.5 653.5,248.0 Q652.0,245.5 650.5,248.0 Q649.0,245.5 647.5,248.0 L646.5,248.0 L646.5,238.0 M646.5,248.0 M645.0,248.0 C644.0,251.5 640.0,251.5 639.0,247.0 M639.0,248.0 Q637.5,245.5 636.0,248.0 M682.5,252.0 L683.5,252.0 M642.2,252.0 L643.2,252.0 M666.9,252.0 L667.9,252.0 M809.0,214.0 Q807.5,211.5 806.0,214.0 C805.0,217.5 801.0,217.5 800.0,213.0 M800.0,214.0 Q799.0,210.0 797.0,210.5 Q795.0,212.0 797.0,214.0 L795.0,214.0 Q794.0,210.0 792.0,210.5 Q790.0,212.0 792.0,214.0 L790.0,214.0 Q788.5,211.5 787.0,214.0 Q785.5,211.5 784.0,214.0 C783.0,217.5 779.0,217.5 778.0,213.0 M778.0,214.0 L774.0,214.0 Q772.5,211.5 771.0,214.0 C770.0,217.5 766.0,217.5 765.0,213.0 M765.0,214.0 C764.0,217.5 760.0,217.5 759.0,213.0 M759.0,214.0 Q758.0,210.0 756.0,210.5 Q754.0,212.0 756.0,214.0 L754.0,214.0 L753.0,214.0 L753.0,202.0 M753.0,214.0 M751.5,214.0 Q750.5,210.0 748.5,210.5 Q746.5,212.0 748.5,214.0 L746.5,214.0 L745.5,214.0 L745.5,202.0 M745.5,214.0 M744.0,214.0 L740.0,214.0 Q738.5,211.5 737.0,214.0 L733.0,214.0 L732.0,214.0 L732.0,202.0 M732.0,214.0 M730.5,214.0 L729.5,214.0 L729.5,202.0 M729.5,214.0 M728.0,214.0 Q726.5,211.5 725.0,214.0 Q723.5,211.5 722.0,214.0 Q721.0,210.0 719.0,210.5 Q717.0,212.0 719.0,214.0 L717.0,214.0 M780.7,218.0 L781.7,218.0 M734.3,218.0 L735.3,218.0 M751.3,218.0 L752.3,218.0 M733.4,218.0 L734.4,218.0 M738.4,218.0 L739.4,218.0 M740.3,218.0 L741.3,218.0 M849.0,275.0 L848.0,275.0 L848.0,265.0 M848.0,275.0 M846.5,275.0 L842.5,275.0 L838.5,275.0 Q837.5,271.0 835.5,271.5 Q833.5,273.0 835.5,275.0 L833.5,275.0 L832.5,275.0 L832.5,265.0 M832.5,275.0 M831.0,275.0 L830.0,275.0 L830.0,265.0 M830.0,275.0 M828.5,275.0 Q827.5,271.0 825.5,271.5 Q823.5,273.0 825.5,275.0 L823.5,275.0 L819.5,275.0 Q818.5,271.0 816.5,271.5 Q814.5,273.0 816.5,275.0 L814.5,275.0 M838.1,279.0 L839.1,279.0 M825.0,279.0 L826.0,279.0 M930.0,279.0 C929.0,282.5 925.0,282.5 924.0,278.0 M924.0,279.0 Q923.0,275.0 921.0,275.5 Q919.0,277.0 921.0,279.0 L919.0,279.0 Q918.0,275.0 916.0,275.5 Q914.0,277.0 916.0,279.0 L914.0,279.0 Q912.5,276.5 911.0,279.0 Q910.0,275.0 908.0,275.5 Q906.0,277.0 908.0,279.0 L906.0,279.0 L905.0,279.0 L905.0,266.0 M905.0,279.0 M903.5,279.0 Q902.0,276.5 900.5,279.0 L896.5,279.0 C895.5,282.5 891.5,282.5 890.5,278.0 M890.5,279.0 Q889.5,275.0 887.5,275.5 Q885.5,277.0 887.5,279.0 L885.5,279.0 Q884.0,276.5 882.5,279.0 Q881.5,275.0 879.5,275.5 Q877.5,277.0 879.5,279.0 L877.5,279.0 M926.7,283.0 L927.7,283.0 M925.0,283.0 L926.0,283.0 M916.7,283.0 L917.7,283.0 M883.0,339.0 Q882.0,335.0 880.0,335.5 Q878.0,337.0 880.0,339.0 L878.0,339.0 Q877.0,335.0 875.0,335.5 Q873.0,337.0 875.0,339.0 L873.0,339.0 C872.0,342.5 868.0,342.5 867.0,338.0 M867.0,339.0 M875.1,343.0 L876.1,343.0 M924.0,341.0 Q923.0,337.0 921.0,337.5 Q919.0,339.0 921.0,341.0 L919.0,341.0 Q918.0,337.0 916.0,337.5 Q914.0,339.0 916.0,341.0 L914.0,341.0 L910.0,341.0 Q908.5,338.5 907.0,341.0 L903.0,341.0 M915.6,345.0 L916.6,345.0 M737.0,409.0 L733.0,409.0 Q731.5,406.5 730.0,409.0 L726.0,409.0 Q725.0,405.0 723.0,405.5 Q721.0,407.0 723.0,409.0 L721.0,409.0 Q719.5,406.5 718.0,409.0 Q717.0,405.0 715.0,405.5 Q713.0,407.0 715.0,409.0 L713.0,409.0 Q711.5,406.5 710.0,409.0 Q708.5,406.5 707.0,409.0 L706.0,409.0 L706.0,400.0 M706.0,409.0 M704.5,409.0 Q703.0,406.5 701.5,409.0 L700.5,409.0 L700.5,400.0 M700.5,409.0 M699.0,409.0 L695.0,409.0 C694.0,412.5 690.0,412.5 689.0,408.0 M689.0,409.0 Q688.0,405.0 686.0,405.5 Q684.0,407.0 686.0,409.0 L684.0,409.0 M706.6,413.0 L707.6,413.0 M726.2,413.0 L727.2,413.0 M726.7,413.0 L727.7,413.0 M785.0,366.0 C784.0,369.5 780.0,369.5 779.0,365.0 M779.0,366.0 L775.0,366.0 Q774.0,362.0 772.0,362.5 Q770.0,364.0 772.0,366.0 L770.0,366.0 L769.0,366.0 L769.0,358.0 M769.0,366.0 M767.5,366.0 Q766.0,363.5 764.5,366.0 C763.5,369.5 759.5,369.5 758.5,365.0 M758.5,366.0 Q757.5,362.0 755.5,362.5 Q753.5,364.0 755.5,366.0 L753.5,366.0 L752.5,366.0 L752.5,358.0 M752.5,366.0 M751.0,366.0 M771.2,370.0 L772.2,370.0 M779.4,370.0 L780.4,370.0 M926.0,505.0 Q925.0,501.0 923.0,501.5 Q921.0,503.0 923.0,505.0 L921.0,505.0 Q919.5,502.5 918.0,505.0 L917.0,505.0 L917.0,498.0 M917.0,505.0 M915.5,505.0 Q914.0,502.5 912.5,505.0 Q911.0,502.5 909.5,505.0 Q908.5,501.0 906.5,501.5 Q904.5,503.0 906.5,505.0 L904.5,505.0 L903.5,505.0 L903.5,498.0 M903.5,505.0 M902.0,505.0 M916.5,509.0 L917.5,509.0 M981.0,585.0 L980.0,585.0 L980.0,578.0 M980.0,585.0 M978.5,585.0 L977.5,585.0 L977.5,578.0 M977.5,585.0 M976.0,585.0 Q974.5,582.5 973.0,585.0 L972.0,585.0 L972.0,578.0 M972.0,585.0 M970.5,585.0 Q969.5,581.0 967.5,581.5 Q965.5,583.0 967.5,585.0 L965.5,585.0 C964.5,588.5 960.5,588.5 959.5,584.0 M959.5,585.0 Q958.0,582.5 956.5,585.0 Q955.0,582.5 953.5,585.0 M962.0,589.0 L963.0,589.0 M1001.0,622.0 Q1000.0,618.0 998.0,618.5 Q996.0,620.0 998.0,622.0 L996.0,622.0 L995.0,622.0 L995.0,615.0 M995.0,622.0 M993.5,622.0 C992.5,625.5 988.5,625.5 987.5,621.0 M987.5,622.0 Q986.5,618.0 984.5,618.5 Q982.5,620.0 984.5,622.0 L982.5,622.0 Q981.0,619.5 979.5,622.0 C978.5,625.5 974.5,625.5 973.5,621.0 M973.5,622.0 Q972.0,619.5 970.5,622.0 Q969.5,618.0 967.5,618.5 Q965.5,620.0 967.5,622.0 L965.5,622.0 Q964.0,619.5 962.5,622.0 M974.8,626.0 L975.8,626.0 M999.5,626.0 L1000.5,626.0 M994.0,660.0 L993.0,660.0 L993.0,652.0 M993.0,660.0 M991.5,660.0 Q990.0,657.5 988.5,660.0 L984.5,660.0 C983.5,663.5 979.5,663.5 978.5,659.0 M978.5,660.0 L974.5,660.0 L973.5,660.0 L973.5,652.0 M973.5,660.0 M972.0,660.0 L971.0,660.0 L971.0,652.0 M971.0,660.0 M969.5,660.0 L965.5,660.0 M980.2,664.0 L981.2,664.0 M993.7,664.0 L994.7,664.0 M928.0,697.0 Q926.5,694.5 925.0,697.0 Q924.0,693.0 922.0,693.5 Q920.0,695.0 922.0,697.0 L920.0,697.0 Q918.5,694.5 917.0,697.0 C916.0,700.5 912.0,700.5 911.0,696.0 M911.0,697.0 Q909.5,694.5 908.0,697.0 Q906.5,694.5 905.0,697.0 L901.0,697.0 L900.0,697.0 L900.0,689.0 M900.0,697.0 M898.5,697.0 Q897.5,693.0 895.5,693.5 Q893.5,695.0 895.5,697.0 L893.5,697.0 M904.0,701.0 L905.0,701.0 M907.3,701.0 L908.3,701.0 M1005.0,698.0 Q1003.5,695.5 1002.0,698.0 C1001.0,701.5 997.0,701.5 996.0,697.0 M996.0,698.0 L992.0,698.0 C991.0,701.5 987.0,701.5 986.0,697.0 M986.0,698.0 L985.0,698.0 L985.0,691.0 M985.0,698.0 M983.5,698.0 L979.5,698.0 L975.5,698.0 C974.5,701.5 970.5,701.5 969.5,697.0 M969.5,698.0 M973.6,702.0 L974.6,702.0 M992.2,702.0 L993.2,702.0"/>
<path fill="none" stroke="#3a2a2a" stroke-width="1.4" stroke-linecap="round" stroke-linejoin="round" d="M132.0,215.0 L131.0,215.0 L131.0,207.0 M131.0,215.0 M129.5,215.0 L125.5,215.0 L124.5,215.0 L124.5,207.0 M124.5,215.0 M123.0,215.0 C122.0,218.5 118.0,218.5 117.0,214.0 M117.0,215.0 C116.0,218.5 112.0,218.5 111.0,214.0 M111.0,215.0 L110.0,215.0 L110.0,207.0 M110.0,215.0 M108.5,215.0 C107.5,218.5 103.5,218.5 102.5,214.0 M102.5,215.0 C101.5,218.5 97.5,218.5 96.5,214.0 M96.5,215.0 L92.5,215.0 L91.5,215.0 L91.5,207.0 M91.5,215.0 M90.0,215.0 L89.0,215.0 L89.0,207.0 M89.0,215.0 M87.5,215.0 L83.5,215.0 Q82.0,212.5 80.5,215.0 Q79.5,211.0 77.5,211.5 Q75.5,213.0 77.5,215.0 L75.5,215.0 C74.5,218.5 70.5,218.5 69.5,214.0 M69.5,215.0 M105.4,219.0 L106.4,219.0 M98.9,219.0 L99.9,219.0 M117.1,219.0 L118.1,219.0 M125.5,219.0 L126.5,219.0 M208.0,285.0 Q207.0,281.0 205.0,281.5 Q203.0,283.0 205.0,285.0 L203.0,285.0 Q202.0,281.0 200.0,281.5 Q198.0,283.0 200.0,285.0 L198.0,285.0 Q196.5,282.5 195.0,285.0 L194.0,285.0 L194.0,276.0 M194.0,285.0 M192.5,285.0 Q191.0,282.5 189.5,285.0 L185.5,285.0 L181.5,285.0 Q180.0,282.5 178.5,285.0 C177.5,288.5 173.5,288.5 172.5,284.0 M172.5,285.0 C171.5,288.5 167.5,288.5 166.5,284.0 M166.5,285.0 Q165.0,282.5 163.5,285.0 M181.3,289.0 L182.3,289.0 M196.9,289.0 L197.9,289.0 M192.2,289.0 L193.2,289.0 M204.0,297.0 Q202.5,294.5 201.0,297.0 Q200.0,293.0 198.0,293.5 Q196.0,295.0 198.0,297.0 L196.0,297.0 Q194.5,294.5 193.0,297.0 C192.0,300.5 188.0,300.5 187.0,296.0 M187.0,297.0 L186.0,297.0 L186.0,288.0 M186.0,297.0 M184.5,297.0 L180.5,297.0 C179.5,300.5 175.5,300.5 174.5,296.0 M174.5,297.0 Q173.5,293.0 171.5,293.5 Q169.5,295.0 171.5,297.0 L169.5,297.0 C168.5,300.5 164.5,300.5 163.5,296.0 M163.5,297.0 M181.7,301.0 L182.7,301.0 M202.7,301.0 L203.7,301.0"/>
<g font-family="Liberation Sans" font-size="10" fill="#5d4141" text-anchor="middle" stroke="#fff" stroke-opacity="0.7" stroke-width="2" paint-order="stroke"><text transform="translate(490,327) rotate(-90)">Doha Rd</text></g>
<g font-family="Liberation Sans" font-size="11.5" font-weight="bold" fill="#3a2a2a" text-anchor="middle"><text text-anchor="end" letter-spacing="0.6" transform="translate(414,712) rotate(-39)">GOVERNORATE</text><text text-anchor="end" letter-spacing="0.6" transform="translate(430,731) rotate(-39)">GOVERNORATE</text></g>
<g fill="#00e64d"><use href="#pin" x="523" y="250.5"/><use href="#pin" x="640" y="295.5"/><use href="#pin" x="705" y="292.5"/><use href="#pin" x="718.5" y="283.5"/><use href="#pin" x="748" y="271" fill="#e565bf"/><use href="#pin" x="808.4" y="231.5"/><use href="#pin" x="862.3" y="235.5"/><use href="#pin" x="903.5" y="237.5"/><use href="#pin" x="927.3" y="246.7"/><use href="#pin" x="739.5" y="337.3"/><use href="#pin" x="746.3" y="342"/><use href="#pin" x="752.5" y="347"/><use href="#pin" x="918.4" y="404"/><use href="#pin" x="968.2" y="495"/><use href="#pin" x="952.4" y="546.8"/><use href="#pin" x="961.6" y="564.7"/><use href="#pin" x="992.6" y="633" fill="#f6776c"/><use href="#pin" x="906.3" y="659"/><use href="#pin" x="975.2" y="671"/></g>
</svg></div>
<!-- google map type control (under sidebar overlay) -->
<div class="abs gbtn" style="left:10px;top:217px;width:168px;height:40px"></div>
<div class="abs" style="left:80px;top:217px;width:1px;height:40px;background:#e6e6e6"></div>
<div class="abs" style="left:26.5px;top:225.5px;font-size:18.8px;color:#000;white-space:nowrap">Map</div>
<div class="abs" style="left:96.5px;top:225.5px;font-size:18.8px;color:#222;white-space:nowrap">Satellite</div>
<div id="sidebar" class="abs"></div>
<div id="sstrip" class="abs"></div>
<svg class="ic" style="left:0;top:0" width="260" height="230"><path d="M238,218.5 L242,214.5 L246,218.5Z" fill="#6b6b6b"/></svg>
<div id="scroll" class="abs"></div>

<div class="abs sbtn" style="top:267px">Main Menu</div>
<div class="abs sbtn" style="top:374px">Drivers Online (3)</div>
<div class="abs sbtn" style="top:431px">Unassigned (1)</div>
<div class="abs sbtn" style="top:488px">In Progress (2)</div>

<div id="stats" class="abs"></div>
<div class="abs stl" style="left:334px">Delivered</div>
<div class="abs stv" style="left:334px">19</div>
<div class="abs stl" style="left:532px">Canceled</div>
<div class="abs stv" style="left:532px">0</div>
<div class="abs stl" style="left:730px">Avg Delivery Time</div>
<div class="abs stv" style="left:730px;margin-top:-2.5px">18 minutes</div>
<div class="abs stl" style="left:929px">Drivers Online</div>
<div class="abs stv" style="left:929px;letter-spacing:1px">3/4</div>

<div id="legend" class="abs"></div>
<svg class="ic" style="left:1200px;top:280px" width="70" height="340">
 <defs><symbol id="lp" overflow="visible"><path d="M0,22.3 C-0.8,17 -2.1,12.7 -6.1,7.6 A8.6,8.6 0 1 1 6.1,7.6 C2.1,12.7 0.8,17 0,22.3Z M0,-2.5 A2.5,2.5 0 1 0 0.01,-2.5Z" fill-rule="evenodd"/></symbol></defs>
 <use href="#lp" x="32.5" y="21.6" fill="#f0ec7c"/>
 <use href="#lp" x="32.5" y="84.6" fill="#6f9cf5"/>
 <use href="#lp" x="32.5" y="147.6" fill="#e070c8"/>
 <use href="#lp" x="32.5" y="210.6" fill="#1ee46c"/>
 <use href="#lp" x="32.5" y="273.6" fill="#f07a78"/>
</svg>
<div class="abs lgl" style="top:329px">New</div>
<div class="abs lgl" style="top:392px">Accepted</div>
<div class="abs lgl" style="top:455px">Started</div>
<div class="abs lgl" style="top:518px">Complete</div>
<div class="abs lgl" style="top:581px">Abandon</div>

<div class="abs gbtn" style="left:1213px;top:217px;width:40px;height:40px"></div>
<svg class="ic" style="left:1213px;top:217px" width="40" height="40"><path d="M12,17 V12 H17 M23,12 H28 V17 M28,23 V28 H23 M17,28 H12 V23" fill="none" stroke="#666" stroke-width="2"/></svg>
<div class="abs gbtn" style="left:1213px;top:636px;width:40px;height:40px"></div>
<svg class="ic" style="left:1213px;top:636px" width="40" height="40">
 <circle cx="20" cy="10.6" r="5.4" fill="#fcbf2a" stroke="#b8862a" stroke-width=".7"/>
 <path d="M14.8,16.3 H25.2 Q27.6,16.3 27.9,18.8 L29,27.5 Q29,28.8 27.8,28.8 Q26.8,28.8 26.6,27.6 L25.7,22 V26.5 L25,34.5 H21.2 L20,27 L18.8,34.5 H15 L14.3,26.5 V22 L13.4,27.6 Q13.2,28.8 12.2,28.8 Q11,28.8 11,27.5 L12.1,18.8 Q12.4,16.3 14.8,16.3Z" fill="#fcbf2a" stroke="#b8862a" stroke-width=".7"/>
 <path d="M17,16.4 L20,21 L23,16.4Z" fill="#e9692a"/>
</svg>
<div class="abs gbtn" style="left:1213px;top:708px;width:40px;height:81px"></div>
<svg class="ic" style="left:1213px;top:708px" width="40" height="52"><path d="M20,11 V28.8 M11,19.9 H29" stroke="#666" stroke-width="3.6"/><line x1="5" y1="40.5" x2="35" y2="40.5" stroke="#e6e6e6" stroke-width="1"/></svg>

<svg class="ic" style="left:1264px;top:74px" width="16" height="686">
 <defs><linearGradient id="tg" x1="0" x2="1"><stop offset="0" stop-color="#e8e8e8"/><stop offset=".5" stop-color="#dcdcdc"/><stop offset="1" stop-color="#c7c7c7"/></linearGradient></defs>
 <rect x="0" y="0" width="16" height="18" fill="#ececec"/>
 <path d="M4.5,13 L8.3,8.8 L12,13Z" fill="#333"/>
 <rect x="1.5" y="18.5" width="13.5" height="598.5" rx="1.5" fill="url(#tg)" stroke="#9a9a9a" stroke-width="1"/>
 <path d="M4.8,312 H11.8 M4.8,314.5 H11.8 M4.8,317 H11.8" stroke="#707070" stroke-width="1"/>
 <path d="M4.5,674.5 L8.3,678.7 L12,674.5Z" fill="#333"/>
</svg>
</body></html>
